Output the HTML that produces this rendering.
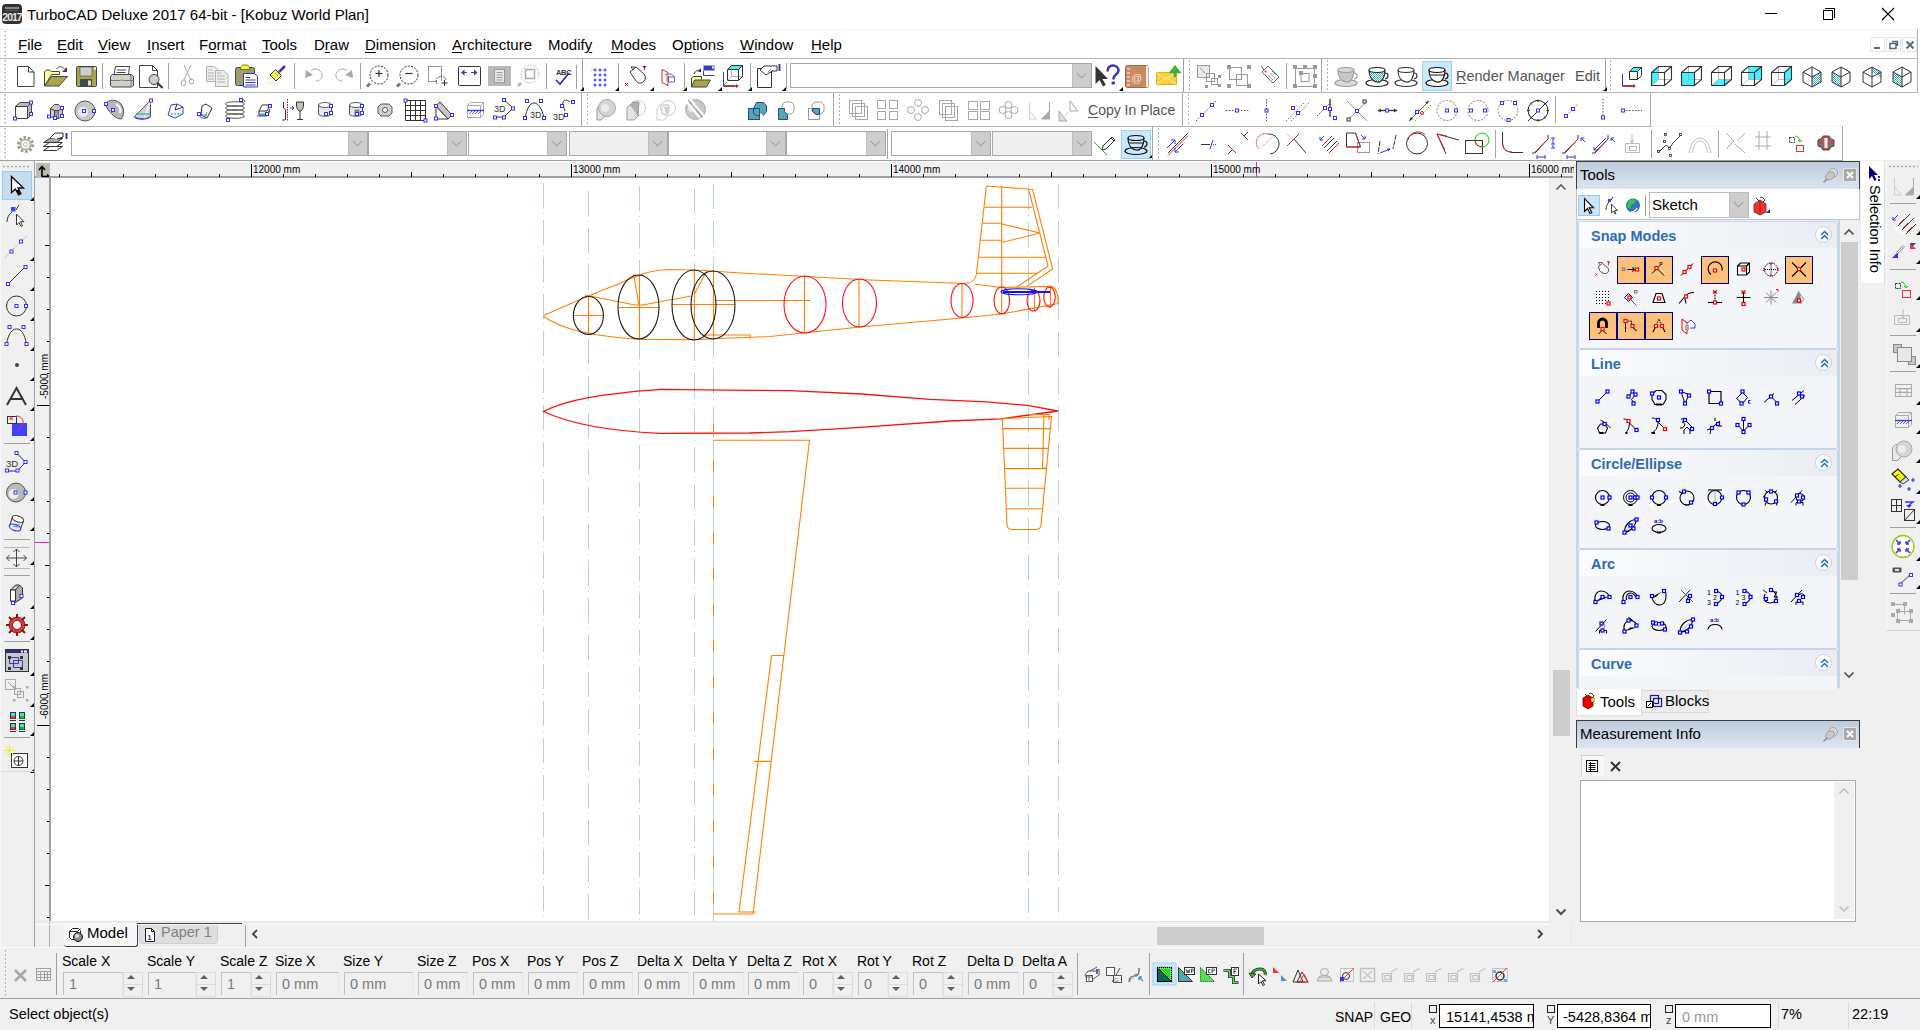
<!DOCTYPE html>
<html><head><meta charset="utf-8">
<style>
*{box-sizing:border-box;margin:0;padding:0}
html,body{width:1920px;height:1030px;overflow:hidden;background:#f0f0f0;font-family:"Liberation Sans",sans-serif;font-size:15px;color:#000;position:relative}
div,span,svg{position:absolute}
.t{white-space:pre}
u{text-decoration:underline;text-underline-offset:2px;text-decoration-thickness:1px}
.hl{left:0;height:1px;background:#b4b4b4}
.vl{width:1px;background:#a8a8a8}
.combo{height:25px;border:1px solid #a9a9a9;background:#fff}
.combo i{position:absolute;right:0;top:0;width:19px;height:23px;background:#cdcdcd;border-left:1px solid #bdbdbd}
.combo i:after{content:"";position:absolute;left:5px;top:6px;width:6px;height:6px;border-right:1px solid #a0a0a0;border-bottom:1px solid #a0a0a0;transform:rotate(45deg)}
.combo.g{background:#f0f0f0}
.combo.g b{position:absolute;left:3px;top:3px;right:22px;bottom:3px;background:#efefef}
.lab{top:953px;font-size:14px}
.inp{top:972px;height:23px;border-top:1px solid #c0c0c0;border-left:1px solid #c0c0c0;border-right:1px solid #e6e6e6;color:#7a7a7a;font-size:14.5px;padding:3px 0 0 5px;white-space:pre}
.spin{top:972px;width:19px;height:23px}
.spin:before,.spin:after{content:"";position:absolute;left:0;width:18px;height:11px;border:1px solid #dcdcdc}
.spin:before{top:0}.spin:after{top:12px}
.up,.dn{width:0;height:0;border-left:4.5px solid transparent;border-right:4.5px solid transparent}
.up{border-bottom:4px solid #606060}.dn{border-top:4px solid #606060}
.sec{left:1578px;width:260px;background:#f3f5f9;border:1px solid #c5d5e8;border-radius:3px}
.sech{left:0;top:0;right:0;height:26px;background:linear-gradient(90deg,#fbfcfd,#e9edf3);border-radius:3px 3px 0 0}
.sect{left:12px;top:6px;font-weight:bold;color:#2e6cb5;font-size:14.5px;white-space:pre}
.chev{right:5px;top:4px;width:17px;height:17px;border-radius:50%;background:#fff;border:1px solid #c5d0dd}
.ob{width:28px;height:28px;background:#fcc27c;border:1px solid #00007f}
</style></head><body>
<!-- ===== title bar ===== -->
<div style="left:0;top:0;width:1920px;height:29px;background:#fff"></div>
<div style="left:2px;top:4px;width:20px;height:20px;background:#333;border-radius:4px"></div>
<div class="t" style="left:2px;top:11px;width:20px;text-align:center;color:#e8e8e8;font-size:10.5px;font-weight:bold;letter-spacing:-1px">2017</div><div style="left:5px;top:7px;width:14px;height:1.5px;background:#8a8a8a"></div><div style="left:6px;top:10px;width:12px;height:1px;background:#5a5a5a"></div>
<div class="t" style="left:27px;top:5.5px">TurboCAD Deluxe 2017 64-bit - [Kobuz World Plan]</div>
<div style="left:1765px;top:13px;width:12px;height:1px;background:#000"></div>
<div style="left:1823px;top:10px;width:10px;height:10px;border:1px solid #000"></div>
<div style="left:1825px;top:8px;width:10px;height:10px;border-top:1px solid #000;border-right:1px solid #000"></div>
<svg style="left:1881px;top:7px" width="14" height="14"><path d="M1 1L13 13M13 1L1 13" stroke="#000" stroke-width="1.1"/></svg>

<!-- ===== toolbar band ===== -->
<div style="left:0;top:29px;width:1920px;height:131px;background:#fff"></div>
<div style="left:0;top:29px;width:1918px;height:1px;background:#eef2f8"></div>
<div style="left:0;top:29px;width:1px;height:131px;background:#eef3fb"></div>
<div style="left:1917px;top:29px;width:1px;height:64px;background:#b4b4b4"></div>
<div class="hl" style="top:58px;width:1918px"></div>
<div class="hl" style="top:92px;width:1918px"></div>
<div class="hl" style="top:126px;width:1650px"></div>
<div style="left:1650px;top:126px;width:193px;height:1px;background:#eef2f8"></div>
<div class="vl" style="left:1650px;top:92px;height:35px"></div>
<div class="vl" style="left:1842px;top:126px;height:35px"></div>
<div class="hl" style="top:160px;width:1843px;background:#a0a0a0"></div>

<svg style="left:0;top:29px" width="10" height="132"><path d="M5 2V28M5 31V62M5 65V96M5 99V130" stroke="#a8a8a8" stroke-width="1.5" stroke-dasharray="1.5 2.5"/></svg>
<!-- menu -->
<div class="t" style="left:18px;top:35.5px"><u>F</u>ile</div>
<div class="t" style="left:57px;top:35.5px"><u>E</u>dit</div>
<div class="t" style="left:98px;top:35.5px"><u>V</u>iew</div>
<div class="t" style="left:147px;top:35.5px"><u>I</u>nsert</div>
<div class="t" style="left:199px;top:35.5px">F<u>o</u>rmat</div>
<div class="t" style="left:262px;top:35.5px"><u>T</u>ools</div>
<div class="t" style="left:314px;top:35.5px">D<u>r</u>aw</div>
<div class="t" style="left:365px;top:35.5px"><u>D</u>imension</div>
<div class="t" style="left:452px;top:35.5px"><u>A</u>rchitecture</div>
<div class="t" style="left:548px;top:35.5px">Modif<u>y</u></div>
<div class="t" style="left:611px;top:35.5px"><u>M</u>odes</div>
<div class="t" style="left:672px;top:35.5px">O<u>p</u>tions</div>
<div class="t" style="left:740px;top:35.5px"><u>W</u>indow</div>
<div class="t" style="left:811px;top:35.5px"><u>H</u>elp</div>
<!-- MDI buttons -->
<div style="left:1870px;top:37px;width:15px;height:15px;border:1px solid #e4e4e4"></div>
<div style="left:1886px;top:37px;width:15px;height:15px;border:1px solid #e4e4e4"></div>
<div style="left:1902px;top:37px;width:15px;height:15px;border:1px solid #e4e4e4"></div>
<div style="left:1874px;top:47px;width:6px;height:2px;background:#5a6a7a"></div>
<svg style="left:1889px;top:40px" width="10" height="10"><path d="M3 1.5h5.5v4.5M1 3.5h6v5h-6z" fill="none" stroke="#5a6a7a" stroke-width="1.5"/></svg>
<svg style="left:1905px;top:40px" width="10" height="10"><path d="M1.5 1.5l7 7M8.5 1.5l-7 7" stroke="#5a6a7a" stroke-width="2"/></svg>

<!-- row1 combos & text -->
<div class="combo" style="left:790px;top:63px;width:302px"><i></i></div>
<div class="t" style="left:1456px;top:68px;color:#555;font-size:14.5px"><u>R</u>ender Manager</div>
<div class="t" style="left:1575px;top:68px;color:#555;font-size:14.5px">Edit</div>
<div class="t" style="left:1088px;top:102px;color:#555;font-size:14px"><u>C</u>opy In Place</div>
<!-- row3 combos -->
<div class="combo" style="left:71px;top:131px;width:297px"><i></i></div>
<div class="combo" style="left:368px;top:131px;width:99px"><i></i></div>
<div class="combo" style="left:468px;top:131px;width:99px"><i></i></div>
<div class="combo g" style="left:569px;top:131px;width:99px"><b></b><i></i></div>
<div class="combo" style="left:668px;top:131px;width:118px"><i></i></div>
<div class="combo" style="left:786px;top:131px;width:100px"><i></i></div>
<div class="vl" style="left:887px;top:129px;height:30px"></div>
<div class="combo" style="left:891px;top:131px;width:100px"><i></i></div>
<div class="combo g" style="left:992px;top:131px;width:100px"><b></b><i></i></div>

<!-- highlighted toolbar buttons -->
<div style="left:1422px;top:61px;width:30px;height:30px;background:#cce8ff;border:1px solid #99d1ff"></div>
<div style="left:1121px;top:130px;width:30px;height:29px;background:#cce8ff;border:1px solid #99d1ff"></div>

<!--ROW1--><svg style="left:0;top:58px" width="1920" height="36" viewBox="0 58 1920 36"><defs><pattern id="hx" width="2" height="2" patternUnits="userSpaceOnUse"><rect width="2" height="2" fill="#fff"/><rect width="1" height="1" fill="#30b8b8"/><rect x="1" y="1" width="1" height="1" fill="#30b8b8"/></pattern></defs><path d="M102.5 63V89" stroke="#a0a0a0"/><path d="M168.5 63V89" stroke="#a0a0a0"/><path d="M294.5 63V89" stroke="#a0a0a0"/><path d="M360.5 63V89" stroke="#a0a0a0"/><path d="M546.5 63V89" stroke="#a0a0a0"/><path d="M576.5 65V89" stroke="#a0a0a0"/><path d="M582.5 59V92" stroke="#a0a0a0"/><path d="M618.5 63V89" stroke="#a0a0a0"/><path d="M684.5 63V89" stroke="#a0a0a0"/><path d="M750.5 63V89" stroke="#a0a0a0"/><path d="M786.5 63V89" stroke="#a0a0a0"/><path d="M1183.5 59V92" stroke="#a0a0a0"/><path d="M1286.5 63V89" stroke="#a0a0a0"/><path d="M1321.5 59V92" stroke="#a0a0a0"/><path d="M1605.5 59V92" stroke="#a0a0a0"/><path d="M580 91h4v-4z" fill="#000"/><path d="M615 91h4v-4z" fill="#000"/><path d="M650 91h4v-4z" fill="#000"/><path d="M683 91h4v-4z" fill="#000"/><path d="M718 91h4v-4z" fill="#000"/><path d="M748 91h4v-4z" fill="#000"/><path d="M782 91h4v-4z" fill="#000"/><path d="M1119 91h4v-4z" fill="#000"/><path d="M1603 91h4v-4z" fill="#000"/><path d="M1189.5 60V91" stroke="#b0b0b0" stroke-dasharray="2 2"/><path d="M1327.5 60V91" stroke="#b0b0b0" stroke-dasharray="2 2"/><path d="M1610.5 60V91" stroke="#b0b0b0" stroke-dasharray="2 2"/><path d="M17.5 66.5h11l5.5 5.5v14.5h-16.5z" fill="#fff" stroke="#444"/><path d="M28.5 66.5v5.5h5.5" fill="none" stroke="#444"/><path d="M44.5 86V71.5l2-1.5h3l2 1.5h8v3h-8z" fill="#ffff9a" stroke="#444"/><path d="M44.5 86l7-9.5h16l-8.5 9.5z" fill="#a9a548" stroke="#444"/><path d="M56.5 69c2-3 6-3 8 0" fill="none" stroke="#444"/><path d="M67 67v5h-5z" fill="#444"/><rect x="76.5" y="66.5" width="20" height="20" rx="1" fill="#a9a548" stroke="#444"/><rect x="80" y="67" width="12" height="9" fill="#cfcfcf" stroke="#444" stroke-width="0.6"/><rect x="80" y="79" width="12" height="8" fill="#484848"/><rect x="88" y="80.5" width="3" height="5" fill="#ddd"/><rect x="94" y="67.5" width="2" height="2" fill="#fff"/><path d="M115.5 66.5h14l-1 8h-14.5z" fill="#fff" stroke="#444"/><path d="M117 70h9M116.5 72.5h9" stroke="#444"/><path d="M110.5 76.5l2-2h19l2 2v9l-2 1.5h-19l-2-1.5z" fill="#cfcfcf" stroke="#444"/><path d="M111 80.5h22M131 75v11" stroke="#777"/><rect x="120" y="79" width="4" height="1.5" fill="#e8d800"/><path d="M139.5 65.5h13l5 5v17h-18z" fill="#fff" stroke="#444"/><path d="M152.5 65.5v5h5" fill="none" stroke="#444"/><circle cx="154" cy="79.5" r="5" fill="#cfcfcf" stroke="#444"/><path d="M157.5 83l5 5" stroke="#333" stroke-width="2"/><path d="M151 77.5l1-1M156 82l1-1" stroke="#3cf" stroke-width="1"/><g fill="none" stroke="#a8a8a8"><path d="M184 65l7 15M191 65l-7 15"/><ellipse cx="183.5" cy="83" rx="2.3" ry="3"/><ellipse cx="191.5" cy="81.5" rx="2.3" ry="2.5"/></g><g stroke="#b0b0b0" fill="#ededed"><path d="M206.5 66.5h8l3 3v12h-11z"/><path d="M215.5 70.5h8l4.5 4.5v11.5h-12.5z"/></g><path d="M208 70h4M208 73h6M208 76h6M208 79h6M217 73h4M217 76h8M217 79h8M217 82h8" stroke="#b0b0b0"/><rect x="235.5" y="67.5" width="19" height="18" rx="2" fill="#a09c6c" stroke="#444"/><path d="M240.5 69.5h9v-2l-2-2.5h-5l-2 2.5z" fill="#ff0" stroke="#444" stroke-width="0.7"/><path d="M243.5 73.5h11l3 3v10.5h-14z" fill="#fff" stroke="#3a3ab8"/><path d="M245.5 77.5h5M245.5 80h10M245.5 82.5h10M245.5 85h10" stroke="#3a3ab8"/><path d="M270 75l5.5-5.5 6 6-5.5 5.5z" fill="#f8f870" stroke="#333"/><path d="M272 77l5-5M274 79l5-5" stroke="#e0e000"/><path d="M279 72l6-6" stroke="#3a3ab8" stroke-width="2.5"/><path d="M268 84l5-2" stroke="#f0f040" stroke-width="2" stroke-dasharray="1 1"/><path d="M311 70.5c4-3 10-1 11 3.5s-3 7-6 7" fill="none" stroke="#a8a8a8" stroke-width="1"/><path d="M305 78l1-8 7 5z" fill="#a8a8a8"/><path d="M347 70.5c-4-3-10-1-11 3.5s3 7 6 7" fill="none" stroke="#a8a8a8" stroke-width="1"/><path d="M353 78l-1-8-7 5z" fill="#a8a8a8"/><circle cx="379" cy="75" r="9" fill="none" stroke="#333" stroke-dasharray="2.2 1.2"/><path d="M370 83.5l-3 3" stroke="#777" stroke-width="3"/><path d="M375.5 73.5h7" stroke="#333" stroke-width="1.2"/><path d="M379 70v7" stroke="#333" stroke-width="1.2"/><circle cx="409" cy="75" r="9" fill="none" stroke="#333" stroke-dasharray="2.2 1.2"/><path d="M400 83.5l-3 3" stroke="#777" stroke-width="3"/><path d="M405.5 73.5h7" stroke="#333" stroke-width="1.2"/><path d="M428.5 66.5h13v14" fill="none" stroke="#333" stroke-dasharray="1 1"/><path d="M428.5 66.5v15h8" fill="none" stroke="#333" stroke-dasharray="1 1"/><path d="M437 84a5 5 0 1 1 9-4" fill="none" stroke="#333" stroke-dasharray="1.5 1"/><path d="M444.5 80v6M441.5 83h6" stroke="#333"/><rect x="458.5" y="66.5" width="22" height="19" rx="1" fill="#fff" stroke="#333"/><path d="M461 72.5l3.5-3v6zM477.5 72.5l-3.5-3v6z" fill="#3a3ab8"/><path d="M464 72.5h3M471 72.5h3" stroke="#3a3ab8"/><rect x="488" y="66" width="23" height="20" fill="#b8b8b8"/><rect x="494.5" y="69.5" width="10" height="13" fill="#e8e8e8" stroke="#999"/><path d="M496.5 72.5h6M496.5 75h6M496.5 77.5h6M496.5 80h6" stroke="#999"/><circle cx="530" cy="74" r="9" fill="none" stroke="#c8c8c8" stroke-dasharray="2 1"/><rect x="525.5" y="69.5" width="9" height="9" fill="none" stroke="#a8a8a8" stroke-width="1.5"/><path d="M521 83l-3 3" stroke="#bbb" stroke-width="3"/><text x="556" y="75" font-family="Liberation Sans" font-weight="bold" font-size="7.5" fill="#333" letter-spacing="-0.3">ABC</text><path d="M556 80l4 4 9-11" fill="none" stroke="#2a2a9a" stroke-width="1.6"/><g fill="#2020ee"><path d="M593.5 70h3M595 68.5v3" stroke="#2020ee"/><path d="M593.5 75h3M595 73.5v3" stroke="#2020ee"/><path d="M593.5 80h3M595 78.5v3" stroke="#2020ee"/><path d="M593.5 85h3M595 83.5v3" stroke="#2020ee"/><path d="M598.5 70h3M600 68.5v3" stroke="#2020ee"/><path d="M598.5 75h3M600 73.5v3" stroke="#2020ee"/><path d="M598.5 80h3M600 78.5v3" stroke="#2020ee"/><path d="M598.5 85h3M600 83.5v3" stroke="#2020ee"/><path d="M603.5 70h3M605 68.5v3" stroke="#2020ee"/><path d="M603.5 75h3M605 73.5v3" stroke="#2020ee"/><path d="M603.5 80h3M605 78.5v3" stroke="#2020ee"/><path d="M603.5 85h3M605 83.5v3" stroke="#2020ee"/></g><path d="M591 68l3 3M594 68l-3 3" stroke="#ee0"/><path d="M630 72l6-5 8 7c2 2 2 6-1 8s-5 1-7-1z" fill="#fff" stroke="#333"/><path d="M633 70l-2-3h4" fill="none" stroke="#333"/><path d="M625 83l3 3M628 83l-3 3" stroke="#e00"/><path d="M643 66l1.5 2 1.5-2M644.5 68v2" stroke="#e00"/><path d="M662 69.5l6 3v13l-6-3z" fill="none" stroke="#e02020"/><path d="M665.5 74h6l3 3h-6zM668.5 77v5h6v-5" fill="#fff" stroke="#3a3ab8" stroke-width="0.8"/><path d="M667 76v5" stroke="#888"/><path d="M691.5 87v-9l2-1.5h8v3" fill="#ffff9a" stroke="#444"/><path d="M691.5 87l3-7h16l-4 7z" fill="#a9a548" stroke="#444"/><rect x="703.5" y="65.5" width="11" height="5" fill="#3a3ab8"/><path d="M703.5 70.5v5h11" fill="none" stroke="#3a3ab8"/><rect x="712" y="66.5" width="2" height="2" fill="#fff"/><path d="M694 74c1-3 4-4 6-4" fill="none" stroke="#333"/><path d="M701 68v4h-3z" fill="#333"/><path d="M727.5 69.5l4-4h11v11l-4 4h-11z" fill="#fff" stroke="#333"/><path d="M727.5 69.5h11l4-4h-11z" fill="#40f0f8" stroke="#333"/><path d="M738.5 69.5v11M731.5 65.5v11h11M727.5 80.5l4-4" stroke="#999" stroke-width="0.7" fill="none"/><path d="M738.5 69.5v11" stroke="#333"/><path d="M723.5 72v14h13" fill="none" stroke="#3a3ab8"/><path d="M723.5 86h12" stroke="#b03030" stroke-width="1.8"/><path d="M736 84l3 2-3 2z" fill="#b03030"/><path d="M724 85l3-3" stroke="#0c0"/><path d="M757.5 68.5h14v19h-14z" fill="#fff" stroke="#333"/><path d="M760 70l4-4h13v5h-5l-6 4z" fill="#fff" stroke="#333"/><path d="M779.5 64v7" stroke="#3a3ab8" stroke-width="2"/><path d="M768 72l3-3M770 73l3-3" stroke="#333" stroke-width="0.6"/><path d="M1095.5 66v18l4-4 3.5 6.5 2.8-1.4-3.3-6.1h5.5z" fill="#333"/><path d="M1107.5 71.5c0-4 2.5-6 5.5-6s5.5 2 5.5 5c0 4-5 4-5 8v1" fill="none" stroke="#3a3ab8" stroke-width="2.6"/><rect x="1111.5" y="81.5" width="3.5" height="3" rx="1" fill="#3a3ab8"/><rect x="1125.5" y="65.5" width="23" height="22" rx="2" fill="#c88a62" stroke="#a06a4a"/><rect x="1146" y="66" width="2.5" height="21" fill="#eee"/><path d="M1127 69h3M1127 73h3M1127 77h3M1127 81h3M1127 85h3" stroke="#fff" stroke-width="1"/><text x="1131" y="82" font-family="Liberation Sans" font-size="11" fill="#f4e0d0">@</text><path d="M1156.5 72.5h20v12h-20z" fill="#f8d040" stroke="#e0b020"/><path d="M1156.5 84.5l10-7 10 7M1156.5 72.5l10 7 10-7" fill="none" stroke="#fff3a0"/><path d="M1175 77v-9M1171 72l4-5 4 5z" stroke="#40b030" fill="#40b030" stroke-width="2.5"/><g fill="none" stroke="#999"><rect x="1197.5" y="65.5" width="12" height="12" fill="#eaeaea"/><rect x="1206.5" y="73.5" width="8" height="8"/><rect x="1211.5" y="78.5" width="6" height="6"/></g><g fill="#999"><rect x="1205" y="85" width="3" height="3"/><rect x="1218" y="84" width="3" height="3"/><rect x="1218" y="75" width="3" height="3"/></g><path d="M1200 68l5 5" stroke="#999"/><g fill="none" stroke="#999"><rect x="1229.5" y="67.5" width="12" height="12"/><rect x="1236.5" y="74.5" width="11" height="11"/></g><g fill="#999"><rect x="1227" y="65" width="4" height="4"/><rect x="1247" y="65" width="4" height="4"/><rect x="1227" y="84" width="4" height="4"/><rect x="1247" y="84" width="4" height="4"/></g><path d="M1262 72l6-6 11 11-6 6z" fill="#fff" stroke="#666"/><path d="M1268 75l5 5M1270 73l5 5M1272 71l4 4" stroke="#777" stroke-width="0.7"/><circle cx="1265.5" cy="71.5" r="1" fill="#d03030"/><path d="M1261 66l3 4" stroke="#666"/><g fill="none" stroke="#999"><path d="M1295.5 68.5h19v18h-19zM1301 73.5h8v8h-8z"/></g><g fill="#999"><rect x="1293" y="65" width="4" height="4"/><rect x="1313" y="65" width="4" height="4"/><rect x="1293" y="84" width="4" height="4"/><rect x="1313" y="84" width="4" height="4"/><rect x="1303" y="65" width="4" height="4"/><rect x="1299" y="71" width="4" height="4"/><rect x="1313" y="74" width="4" height="4"/></g><ellipse cx="1346" cy="83" rx="11" ry="3.5" fill="#d8d8d8" stroke="#9a9a9a" stroke-width="1.1"/><path d="M1338 70c0 5 2 11 8 12s8-7 8-12" fill="#c8c8c8" stroke="#9a9a9a" stroke-width="1.1"/><ellipse cx="1346" cy="70" rx="8" ry="2.5" fill="#d8d8d8" stroke="#9a9a9a" stroke-width="1.1"/><path d="M1354 73c4 0 4 5 0 6" fill="none" stroke="#9a9a9a" stroke-width="1.1"/><ellipse cx="1377" cy="83" rx="11" ry="3.5" fill="#fff" stroke="#222" stroke-width="1.1"/><path d="M1369 70c0 5 2 11 8 12s8-7 8-12" fill="url(#hx)" stroke="#222" stroke-width="1.1"/><ellipse cx="1377" cy="70" rx="8" ry="2.5" fill="#fff" stroke="#222" stroke-width="1.1"/><path d="M1385 73c4 0 4 5 0 6" fill="none" stroke="#222" stroke-width="1.1"/><ellipse cx="1406" cy="83" rx="11" ry="3.5" fill="#fff" stroke="#333" stroke-width="1.1"/><path d="M1398 70c0 5 2 11 8 12s8-7 8-12" fill="#fff" stroke="#333" stroke-width="1.1"/><ellipse cx="1406" cy="70" rx="8" ry="2.5" fill="#fff" stroke="#333" stroke-width="1.1"/><path d="M1414 73c4 0 4 5 0 6" fill="none" stroke="#333" stroke-width="1.1"/><ellipse cx="1437" cy="83" rx="11" ry="3.5" fill="#fff" stroke="#111" stroke-width="1.1"/><path d="M1429 70c0 5 2 11 8 12s8-7 8-12" fill="#fff" stroke="#111" stroke-width="1.1"/><ellipse cx="1437" cy="70" rx="8" ry="2.5" fill="#fff" stroke="#111" stroke-width="1.1"/><path d="M1445 73c4 0 4 5 0 6" fill="none" stroke="#111" stroke-width="1.1"/><path d="M1430 75h14" stroke="#111"/><path d="M1629.5 71.5l4-4h8v8l-4 4h-8z" fill="#fff" stroke="#333"/><path d="M1629.5 71.5h8l4-4h-8z" fill="#40f4ff" stroke="#333"/><path d="M1637.5 71.5v8" stroke="#333"/><path d="M1622.5 74v12h11" fill="none" stroke="#3a3ab8"/><path d="M1622.5 86h11" stroke="#b03030" stroke-width="1.8"/><path d="M1633 84l3 2-3 2z" fill="#b03030"/><path d="M1651.5 72.5l7-6v13l-7 6z" fill="#40f4ff"/><path d="M1658.5 66.5v13h13M1651.5 85.5l7-6" fill="none" stroke="#aaa" stroke-width="0.8"/><path d="M1651.5 72.5h13v13h-13zM1651.5 72.5l7-6h13v13l-7 6M1664.5 72.5l7-6" fill="none" stroke="#333" stroke-width="1.1"/><path d="M1681.5 72.5h13v13h-13z" fill="#40f4ff"/><path d="M1688.5 66.5v13h13M1681.5 85.5l7-6" fill="none" stroke="#aaa" stroke-width="0.8"/><path d="M1681.5 72.5h13v13h-13zM1681.5 72.5l7-6h13v13l-7 6M1694.5 72.5l7-6" fill="none" stroke="#333" stroke-width="1.1"/><path d="M1711.5 85.5l7-6h13l-7 6z" fill="#40f4ff"/><path d="M1718.5 66.5v13h13M1711.5 85.5l7-6" fill="none" stroke="#aaa" stroke-width="0.8"/><path d="M1711.5 72.5h13v13h-13zM1711.5 72.5l7-6h13v13l-7 6M1724.5 72.5l7-6" fill="none" stroke="#333" stroke-width="1.1"/><path d="M1748.5 66.5h13v13h-13z" fill="#40f4ff"/><path d="M1748.5 66.5v13h13M1741.5 85.5l7-6" fill="none" stroke="#aaa" stroke-width="0.8"/><path d="M1741.5 72.5h13v13h-13zM1741.5 72.5l7-6h13v13l-7 6M1754.5 72.5l7-6" fill="none" stroke="#333" stroke-width="1.1"/><path d="M1784.5 72.5l7-6v13l-7 6z" fill="#40f4ff"/><path d="M1778.5 66.5v13h13M1771.5 85.5l7-6" fill="none" stroke="#aaa" stroke-width="0.8"/><path d="M1771.5 72.5h13v13h-13zM1771.5 72.5l7-6h13v13l-7 6M1784.5 72.5l7-6" fill="none" stroke="#333" stroke-width="1.1"/><path d="M1812 77l9-5v10l-9 5z" fill="url(#hx)"/><path d="M1812 67l9 5v10l-9 5-9-5v-10zM1812 77v10M1812 77l9-5M1812 77l-9-5M1812 67v10" fill="none" stroke="#333" stroke-width="1"/><path d="M1841 77l-9-5v10l9 5z" fill="url(#hx)"/><path d="M1841 67l9 5v10l-9 5-9-5v-10zM1841 77v10M1841 77l9-5M1841 77l-9-5M1841 67v10" fill="none" stroke="#333" stroke-width="1"/><path d="M1872 67l9 5v5l-9-5z" fill="url(#hx)"/><path d="M1872 67l9 5v10l-9 5-9-5v-10zM1872 77v10M1872 77l9-5M1872 77l-9-5M1872 67v10" fill="none" stroke="#333" stroke-width="1"/><path d="M1902 77l-9-5v10l9 5z" fill="url(#hx)"/><path d="M1902 67l9 5v10l-9 5-9-5v-10zM1902 77v10M1902 77l9-5M1902 77l-9-5M1902 67v10" fill="none" stroke="#333" stroke-width="1"/></svg><!--/ROW1-->
<!--ROW23--><svg style="left:0;top:92px" width="1920" height="70" viewBox="0 92 1920 70"><path d="M581.5 93V126" stroke="#a8a8a8"/><path d="M833.5 93V126" stroke="#a8a8a8"/><path d="M1182.5 93V126" stroke="#a8a8a8"/><path d="M1555.5 96V123" stroke="#a8a8a8"/><path d="M587.5 94V125" stroke="#b0b0b0" stroke-dasharray="2 2"/><path d="M839.5 94V125" stroke="#b0b0b0" stroke-dasharray="2 2"/><path d="M1188.5 94V125" stroke="#b0b0b0" stroke-dasharray="2 2"/><path d="M15.5 106.5l4-4h12v12l-4 4" fill="#b8b8b8" stroke="#444"/><rect x="15.5" y="106.5" width="12" height="12" fill="#fff" stroke="#444"/><path d="M27.5 106.5l4-4" stroke="#444"/><rect x="29.5" y="101.0" width="3" height="3" fill="#fff" stroke="#3030ff" stroke-width="1"/><rect x="29.5" y="112.5" width="3" height="3" fill="#fff" stroke="#3030ff" stroke-width="1"/><rect x="13.5" y="117.0" width="3" height="3" fill="#fff" stroke="#3030ff" stroke-width="1"/><path d="M50.5 108.5l4-4h4l4 4v8l-4 2h-4l-4-2z" fill="#c8c8c8" stroke="#444"/><path d="M50.5 108.5l4 2h4l4-2M54.5 110.5v8M58.5 110.5v8" fill="none" stroke="#444"/><rect x="55" y="111" width="3.5" height="7" fill="#999"/><path d="M49 117h5" stroke="#0cc"/><rect x="47.5" y="115.0" width="3" height="3" fill="#fff" stroke="#3030ff" stroke-width="1"/><rect x="60.5" y="106.5" width="3" height="3" fill="#fff" stroke="#3030ff" stroke-width="1"/><rect x="60.5" y="114.5" width="3" height="3" fill="#fff" stroke="#3030ff" stroke-width="1"/><rect x="53.5" y="116.5" width="3" height="3" fill="#fff" stroke="#3030ff" stroke-width="1"/><circle cx="85" cy="111" r="10" fill="#c8c8c8" stroke="#555"/><circle cx="83" cy="112" r="5" fill="#ececec"/><rect x="82.5" y="109.5" width="3" height="3" fill="#fff" stroke="#3030ff" stroke-width="1"/><rect x="92.5" y="109.5" width="3" height="3" fill="#fff" stroke="#3030ff" stroke-width="1"/><path d="M105 104c4-5 12-5 16 0s3 12 0 15c-6 0-13-8-16-15z" fill="#b8b8b8" stroke="#555"/><path d="M116 104c4 2 5 6 4 9" stroke="#fff" stroke-width="2" fill="none"/><rect x="104.5" y="102.5" width="3" height="3" fill="#fff" stroke="#3030ff" stroke-width="1"/><rect x="111.5" y="108.5" width="3" height="3" fill="#fff" stroke="#3030ff" stroke-width="1"/><path d="M150.5 100.5l-16 16c3 3 13 3 16 0z" fill="#d0d0d0" stroke="#555"/><path d="M150.5 100.5l-6 18" stroke="#f0f0f0" stroke-width="2"/><path d="M136 114h14" stroke="#0aa"/><path d="M134 117c3 3 13 3 16 0" fill="none" stroke="#33f"/><rect x="149.5" y="99.0" width="3" height="3" fill="#fff" stroke="#3030ff" stroke-width="1"/><path d="M171 105l6-1 6 3v7l-8 4-7-3z" fill="#fff" stroke="#33f"/><path d="M177 104l-2 6M175 110l8-3" stroke="#333" fill="none"/><path d="M171 114h11" stroke="#0aa" stroke-dasharray="2 1"/><path d="M202 106l4-2 6 4-5 10-6-3z" fill="#fff" stroke="#333"/><path d="M199 115c1 3 5 4 7 3" fill="none" stroke="#33f"/><path d="M207 112l-2 5" stroke="#888"/><path d="M202 115h5" stroke="#0aa"/><rect x="197.5" y="112.5" width="3" height="3" fill="#fff" stroke="#3030ff" stroke-width="1"/><g fill="none" stroke="#555"><ellipse cx="235" cy="104" rx="9.5" ry="2.3"/><ellipse cx="235" cy="108" rx="9.5" ry="2.3"/><ellipse cx="235" cy="112" rx="9.5" ry="2.3"/><ellipse cx="235" cy="116" rx="9.5" ry="2.3"/></g><path d="M244.5 102c0-2-1-3-2-3" fill="none" stroke="#555"/><rect x="239.5" y="98.5" width="3" height="3" fill="#fff" stroke="#3030ff" stroke-width="1"/><rect x="226.5" y="118.5" width="3" height="3" fill="#fff" stroke="#3030ff" stroke-width="1"/><path d="M259 111l3-6h8l-3 6zM259 111v4l8 0 3-6" fill="#fff" stroke="#333"/><path d="M260 114h8" stroke="#0aa"/><path d="M257 116h10l3-5" fill="none" stroke="#33f"/><rect x="268.5" y="104.5" width="3" height="3" fill="#fff" stroke="#3030ff" stroke-width="1"/><rect x="265.5" y="112.5" width="3" height="3" fill="#fff" stroke="#3030ff" stroke-width="1"/><path d="M283.5 102v6l2 2v10" fill="none" stroke="#333"/><path d="M282 120h3" stroke="#333"/><path d="M287.5 99v22" stroke="#e00" stroke-dasharray="1.5 1"/><path d="M290 108h4M292 106l2 2-2 2" fill="none" stroke="#33f"/><path d="M296.5 102h7v3c0 4-2 6-3.5 6s-3.5-2-3.5-6z" fill="#c0c0c0" stroke="#333"/><path d="M300 111v8M297 119.5h6" stroke="#333"/><path d="M318.5 105v9c0 3 13 3 13 0v-9" fill="#e8e8e8" stroke="#555"/><ellipse cx="325" cy="105" rx="6.5" ry="2.5" fill="#fff" stroke="#555"/><path d="M349.5 105v9c0 3 13 3 13 0v-9" fill="#e8e8e8" stroke="#555"/><ellipse cx="356" cy="105" rx="6.5" ry="2.5" fill="#fff" stroke="#555"/><rect x="329.5" y="104.5" width="3" height="3" fill="#fff" stroke="#3030ff" stroke-width="1"/><rect x="329.5" y="111.5" width="3" height="3" fill="#fff" stroke="#3030ff" stroke-width="1"/><rect x="324.5" y="112.5" width="3" height="3" fill="#fff" stroke="#3030ff" stroke-width="1"/><rect x="354.5" y="109.5" width="5" height="6" fill="#888"/><rect x="360.5" y="104.5" width="3" height="3" fill="#fff" stroke="#3030ff" stroke-width="1"/><rect x="360.5" y="111.5" width="3" height="3" fill="#fff" stroke="#3030ff" stroke-width="1"/><rect x="355.5" y="112.5" width="3" height="3" fill="#fff" stroke="#3030ff" stroke-width="1"/><path d="M381 104h8l3 3v6l-3 3h-8l-3-3v-6z" fill="#d0d0d0" stroke="#555"/><circle cx="385" cy="110" r="2.5" fill="#fff" stroke="#555"/><path d="M405.5 100.5h20v20h-20zM405.5 105.5h20M405.5 110.5h20M405.5 115.5h20M410.5 100.5v20M415.5 100.5v20M420.5 100.5v20" fill="none" stroke="#333"/><rect x="404.0" y="99.0" width="3" height="3" fill="#fff" stroke="#3030ff" stroke-width="1"/><rect x="424.0" y="119.0" width="3" height="3" fill="#fff" stroke="#3030ff" stroke-width="1"/><path d="M436 106v13h12z" fill="#fff" stroke="#333"/><path d="M436 106l4-4 12 13-4 4z" fill="#c8c8c8" stroke="#333"/><rect x="434.5" y="104.5" width="3" height="3" fill="#fff" stroke="#3030ff" stroke-width="1"/><rect x="434.5" y="117.0" width="3" height="3" fill="#fff" stroke="#3030ff" stroke-width="1"/><rect x="450.5" y="113.5" width="3" height="3" fill="#fff" stroke="#3030ff" stroke-width="1"/><g fill="none" stroke="#aaa"><path d="M467.5 105.5l3-3h13v12l-3 3h-13zM467.5 105.5h13v12M480.5 105.5l3-3"/></g><path d="M467 110.5h17" stroke="#33f" stroke-width="1.3"/><path d="M469 114l3-3M472 114l3-3M475 114l3-3M478 114l3-3" stroke="#33f" stroke-width="0.8"/><text x="494" y="112" font-family="Liberation Sans" font-size="9" fill="#333">3D</text><path d="M504 100l9 8-9 9h-9" fill="none" stroke="#333"/><rect x="502.5" y="98.5" width="3" height="3" fill="#fff" stroke="#3030ff" stroke-width="1"/><rect x="511.5" y="107.0" width="3" height="3" fill="#fff" stroke="#3030ff" stroke-width="1"/><rect x="502.5" y="116.0" width="3" height="3" fill="#fff" stroke="#3030ff" stroke-width="1"/><rect x="493.5" y="116.0" width="3" height="3" fill="#fff" stroke="#3030ff" stroke-width="1"/><text x="530" y="118" font-family="Liberation Sans" font-size="9" fill="#333">3D</text><path d="M525 118c2-10 5-15 9-15s8 5 10 15" fill="none" stroke="#333"/><rect x="525.5" y="99.5" width="3" height="3" fill="#fff" stroke="#3030ff" stroke-width="1"/><rect x="539.5" y="99.5" width="3" height="3" fill="#fff" stroke="#3030ff" stroke-width="1"/><rect x="523.5" y="116.5" width="3" height="3" fill="#fff" stroke="#3030ff" stroke-width="1"/><rect x="542.5" y="116.5" width="3" height="3" fill="#fff" stroke="#3030ff" stroke-width="1"/><text x="553" y="120" font-family="Liberation Sans" font-size="9" fill="#333">3D</text><path d="M563 102c2-3 5-2 7 0M563 102c-1 3 1 5 2 9" fill="none" stroke="#333"/><rect x="560.5" y="104.5" width="3" height="3" fill="#fff" stroke="#3030ff" stroke-width="1"/><rect x="571.5" y="100.5" width="3" height="3" fill="#fff" stroke="#3030ff" stroke-width="1"/><rect x="564.5" y="113.5" width="3" height="3" fill="#fff" stroke="#3030ff" stroke-width="1"/><path d="M597 108l3-3h5v11l-4 4h-4z" fill="#e4e4e4" stroke="#999"/><circle cx="607" cy="108" r="8.5" fill="#d4d4d4" stroke="#aaa"/><circle cx="605" cy="108" r="4" fill="#ececec"/><circle cx="638" cy="108" r="7.5" fill="none" stroke="#ccc"/><path d="M627 108l3-3h8v11l-4 4h-7z" fill="#e4e4e4" stroke="#999"/><path d="M630 105l3-3h6l-1 14" fill="#b0b0b0" stroke="#999"/><g fill="none" stroke="#ccc"><circle cx="668" cy="108" r="7.5"/><path d="M657 108l3-3h8v11l-4 4h-7z"/><path d="M662 107l2-2h5v7l-2 2h-5z"/></g><path d="M664 107h4v5l-2 2" fill="#ccc"/><circle cx="695.5" cy="109.5" r="10" fill="#c8c8c8" stroke="#aaa"/><circle cx="692" cy="108" r="4" fill="#eee"/><path d="M686 101l14 17M690 99l14 17" stroke="#fff" stroke-width="2"/><path d="M688 100l14 17" stroke="#888"/><path d="M753.5 108.5l3-6h7l3 3v6l-3 4" fill="#50aaa8" stroke="#3a3ab8"/><rect x="748.5" y="108.5" width="11" height="11" fill="#50aaa8" stroke="#3a3ab8"/><path d="M753.5 108.5v5l3 2h3" fill="none" stroke="#3a3ab8"/><path d="M785 102l6 0 3 3v6l-3 3h-6l-3-3v-6z" fill="none" stroke="#999"/><path d="M778.5 108.5h6v3l3 3v5h-9z" fill="#50aaa8" stroke="#3a3ab8"/><path d="M815 102l6 0 3 3v6l-3 3h-6l-3-3v-6z" fill="none" stroke="#999"/><rect x="808.5" y="108.5" width="11" height="11" fill="none" stroke="#999"/><path d="M812.5 108.5h7v6h-3l-4-3z" fill="#50aaa8" stroke="#3a3ab8"/><g fill="none" stroke="#a8a8a8"><rect x="849.5" y="100.5" width="12" height="13"/><rect x="852.5" y="103.5" width="12" height="13"/><rect x="855.5" y="106.5" width="12" height="13"/></g><g fill="none" stroke="#a8a8a8"><rect x="877.5" y="100.5" width="8" height="8"/><rect x="889.5" y="100.5" width="8" height="8"/><rect x="877.5" y="111.5" width="8" height="8"/><rect x="889.5" y="111.5" width="8" height="8"/></g><g fill="none" stroke="#a8a8a8"><circle cx="918" cy="103" r="3.5"/><circle cx="911" cy="110" r="3.5"/><circle cx="925" cy="110" r="3.5"/><circle cx="918" cy="117" r="3.5"/></g><g fill="none" stroke="#a8a8a8"><rect x="939.5" y="100.5" width="12" height="14"/><rect x="942.5" y="103.5" width="12" height="14"/><rect x="945.5" y="106.5" width="12" height="14"/></g><g fill="none" stroke="#a8a8a8"><rect x="968.5" y="101.5" width="9" height="8"/><rect x="980.5" y="101.5" width="9" height="8"/><rect x="968.5" y="111.5" width="9" height="8"/><rect x="980.5" y="111.5" width="9" height="8"/></g><g fill="none" stroke="#a8a8a8"><circle cx="1008.5" cy="105" r="3.5"/><circle cx="1002.5" cy="110" r="3.5"/><circle cx="1014.5" cy="110" r="3.5"/><circle cx="1008.5" cy="115" r="3.5"/></g><path d="M1029.5 102v17h7l-7-8" fill="none" stroke="#ccc"/><path d="M1049.5 102v17h-8l8-8z" fill="#aaa" stroke="#a8a8a8"/><path d="M1070 101v10h8z" fill="none" stroke="#a8a8a8"/><path d="M1059 111v10h8z" fill="#ddd" stroke="#a8a8a8"/><path d="M1062 118l6-6" stroke="#ccc"/><path d="M1196 121l20-20" stroke="#555" stroke-dasharray="1.5 1.5"/><rect x="1200.5" y="113.5" width="3" height="3" fill="#fff" stroke="#3030ff" stroke-width="1"/><rect x="1210.5" y="103.5" width="3" height="3" fill="#fff" stroke="#3030ff" stroke-width="1"/><path d="M1226 110.5h24" stroke="#555" stroke-dasharray="1.5 1.5"/><rect x="1235.5" y="109.0" width="3" height="3" fill="#fff" stroke="#3030ff" stroke-width="1"/><path d="M1266.5 99v22" stroke="#555" stroke-dasharray="1.5 1.5"/><rect x="1265.0" y="109.0" width="3" height="3" fill="#fff" stroke="#3030ff" stroke-width="1"/><path d="M1286 121l18-18M1291 121l18-18" stroke="#777" stroke-dasharray="1.5 1.5"/><rect x="1291.5" y="106.5" width="3" height="3" fill="#fff" stroke="#3030ff" stroke-width="1"/><rect x="1296.5" y="111.5" width="3" height="3" fill="#fff" stroke="#3030ff" stroke-width="1"/><path d="M1317 116l14-14M1330 99v18" stroke="#333" stroke-dasharray="1.5 1"/><path d="M1330 99v18" stroke="#333"/><rect x="1323.5" y="106.5" width="3" height="3" fill="#fff" stroke="#3030ff" stroke-width="1"/><rect x="1328.5" y="107.5" width="3" height="3" fill="#fff" stroke="#3030ff" stroke-width="1"/><rect x="1333.5" y="116.5" width="3" height="3" fill="#fff" stroke="#3030ff" stroke-width="1"/><path d="M1347 121l20-20M1347 101l20 20" stroke="#777" stroke-width="0.8"/><rect x="1355.5" y="109.5" width="3" height="3" fill="#fff" stroke="#3030ff" stroke-width="1"/><rect x="1363" y="100" width="3" height="3" fill="#fff" stroke="#333"/><rect x="1347" y="118" width="3" height="3" fill="#fff" stroke="#333"/><path d="M1378 110.5h19" stroke="#333" stroke-width="1.3"/><path d="M1378 110.5l3-2v4zM1397 110.5l-3-2v4z" fill="#333"/><rect x="1385.5" y="109.0" width="3" height="3" fill="#fff" stroke="#3030ff" stroke-width="1"/><path d="M1409 121l20-20" stroke="#333" stroke-width="0.8"/><path d="M1409 121l2-4 2 2z" fill="#333"/><path d="M1429 101l-4 1 2 2z" fill="#333"/><path d="M1415 121l16-16" stroke="#aa0" stroke-dasharray="1.5 1.5"/><rect x="1415.5" y="110.5" width="3" height="3" fill="#fff" stroke="#3030ff" stroke-width="1"/><circle cx="1422" cy="113" r="1.5" fill="#fff" stroke="#e00"/><circle cx="1447" cy="110.5" r="10" fill="none" stroke="#777" stroke-dasharray="2 1.5"/><rect x="1445.5" y="109.0" width="3" height="3" fill="#fff" stroke="#3030ff" stroke-width="1"/><rect x="1454.5" y="109.0" width="3" height="3" fill="#fff" stroke="#3030ff" stroke-width="1"/><circle cx="1478" cy="110.5" r="10" fill="none" stroke="#777" stroke-dasharray="2 1.5"/><rect x="1469.5" y="109.0" width="3" height="3" fill="#fff" stroke="#3030ff" stroke-width="1"/><rect x="1483.5" y="109.0" width="3" height="3" fill="#fff" stroke="#3030ff" stroke-width="1"/><circle cx="1508" cy="110.5" r="10" fill="none" stroke="#777" stroke-dasharray="2 1.5"/><rect x="1500.5" y="101.5" width="3" height="3" fill="#fff" stroke="#3030ff" stroke-width="1"/><rect x="1513.5" y="101.5" width="3" height="3" fill="#fff" stroke="#3030ff" stroke-width="1"/><rect x="1507.0" y="118.5" width="3" height="3" fill="#fff" stroke="#3030ff" stroke-width="1"/><circle cx="1538" cy="110.5" r="10" fill="none" stroke="#222"/><path d="M1528 121l20-20" stroke="#333"/><path d="M1546.5 110.5L1549.0 110.5" stroke="#222"/><path d="M1544.0128002879212 116.5080140393956L1545.7812709608393 118.27507699215903" stroke="#222"/><path d="M1538.0067687770413 118.9999973049206L1538.008759593818 121.49999651225018" stroke="#222"/><path d="M1531.99677601903 116.51758272351168L1530.23112190698 118.28745999513275" stroke="#222"/><path d="M1529.500010780316 110.51353754979014L1527.000013950997 110.51751918208136" stroke="#222"/><path d="M1531.9776386568658 104.50156988431795L1530.206355908885 102.73732573264675" stroke="#222"/><path d="M1537.9796936860455 102.0000242557044L1537.973721240765 99.5000313897351" stroke="#222"/><path d="M1543.9936324465716 104.47286385624116L1545.7564655190927 102.70017675513562" stroke="#222"/><rect x="1536.5" y="109.0" width="3" height="3" fill="#fff" stroke="#3030ff" stroke-width="1"/><path d="M1565 117l13-13" stroke="#555" stroke-dasharray="1.5 1.5"/><rect x="1564.5" y="114.5" width="3" height="3" fill="#fff" stroke="#3030ff" stroke-width="1"/><rect x="1571.5" y="107.5" width="3" height="3" fill="#fff" stroke="#3030ff" stroke-width="1"/><path d="M1603 99v17" stroke="#555" stroke-dasharray="1.5 1.5"/><rect x="1601.5" y="116.0" width="3" height="3" fill="#fff" stroke="#3030ff" stroke-width="1"/><path d="M1623 110.5h19" stroke="#555" stroke-dasharray="1.5 1.5"/><rect x="1621.5" y="109.0" width="3" height="3" fill="#fff" stroke="#3030ff" stroke-width="1"/><path d="M1152.5 127V160" stroke="#a8a8a8"/><path d="M1158.5 128V159" stroke="#b0b0b0" stroke-dasharray="2 2"/><path d="M1495.5 130V158" stroke="#a8a8a8"/><path d="M1651.5 130V158" stroke="#a8a8a8"/><path d="M1718.5 130V158" stroke="#a8a8a8"/><g transform="translate(25.5 144.5)"><circle r="7" fill="none" stroke="#9a9a86" stroke-width="3" stroke-dasharray="2.5 1.9"/><circle r="5" fill="none" stroke="#b8b8a8" stroke-width="2"/><circle r="2" fill="#fff" stroke="#bbb"/></g><path d="M43.5 150.5l6-4h13l-6 4zM43.5 146.5l6-4h13l-6 4z" fill="#fff" stroke="#333"/><path d="M43.5 142.5l6-4h13l-6 4z" fill="#aaa" stroke="#333"/><path d="M50 138l5-5h8v4l-6 2" fill="#fff" stroke="#333"/><path d="M66.5 133v6" stroke="#3a3ab8" stroke-width="2"/><path d="M1094 142l13 13" stroke="#0c0"/><path d="M1103 146l9-9 3 3-9 9-4 1z" fill="#fff" stroke="#333"/><path d="M1111 138l3 3" stroke="#333"/><ellipse cx="1136" cy="151" rx="11" ry="3.5" fill="none" stroke="#111" stroke-width="1.2"/><path d="M1128 138c0 5 2 11 8 12s8-7 8-12" fill="none" stroke="#111" stroke-width="1.2"/><ellipse cx="1136" cy="138" rx="8" ry="2.5" fill="none" stroke="#111" stroke-width="1.2"/><path d="M1144 141c4 0 4 5 0 6M1129 143h14" fill="none" stroke="#111" stroke-width="1.2"/><path d="M1149 158h3v-3z" fill="#000"/><path d="M1168 153l20-20" stroke="#333"/><path d="M1168 155.5l20-20" stroke="#e02020"/><path d="M1167 148l8-8M1175 140h-4M1175 140v4" fill="none" stroke="#3030ff"/><path d="M1183 144l-8 8M1175 152h4M1175 152v-4" fill="none" stroke="#3030ff"/><path d="M1201 144.5h9" stroke="#333"/><path d="M1213 140l-3 9" stroke="#3030ff"/><path d="M1213 144.5h4" stroke="#e02020" stroke-dasharray="1 1"/><path d="M1241 133l7 7M1244 136l4-4" stroke="#e02020" stroke-width="1"/><path d="M1244 136l4-4" stroke="#333"/><path d="M1228 145l8 8M1228 154l4-4" stroke="#e02020"/><path d="M1228 154l4-4" stroke="#333"/><path d="M1259 149a9 9 0 0 1 9-15" fill="none" stroke="#e02020" stroke-dasharray="2 1"/><path d="M1268 134a9 9 0 0 1 2 20" fill="none" stroke="#333"/><path d="M1263 146l10-10" stroke="#999" stroke-dasharray="1 1"/><path d="M1287 146l12-12" stroke="#e02020"/><path d="M1294 139l12 14" stroke="#333"/><path d="M1287 134l6 6" stroke="#999" stroke-dasharray="1 1"/><path d="M1324 148l10-10M1327 151l10-10" stroke="#333"/><path d="M1322 146l10-10M1329 153l10-10" stroke="#e02020"/><path d="M1320 140l4-4M1320 140h3M1320 140v-3" fill="none" stroke="#3030ff"/><path d="M1346.5 133h9l5 14h-14z" fill="none" stroke="#333"/><path d="M1355.5 133l5 14h-14" fill="none" stroke="#e02020"/><rect x="1357.5" y="142.5" width="12" height="10" fill="none" stroke="#333" stroke-dasharray="1 1"/><path d="M1361 135l4 4h-3M1365 139v-3" fill="none" stroke="#3030ff"/><path d="M1380 141l-2 13M1396 135l-3 14" stroke="#333" stroke-dasharray="5 1"/><path d="M1380 153l10-4M1390 149h-3M1390 149l-2 2" fill="none" stroke="#3030ff"/><path d="M1417 133a10 10 0 0 1 0 21a10 10 0 0 1 0-21" fill="none" stroke="#333"/><path d="M1408 140a10 10 0 0 1 17-5" fill="none" stroke="#e02020"/><path d="M1437 134l9 20" stroke="#333"/><path d="M1437 134l8 16" stroke="#e02020"/><path d="M1437 134l22 6" stroke="#333"/><path d="M1437 134l10 2" stroke="#e02020"/><rect x="1465.5" y="140.5" width="17" height="13" fill="none" stroke="#333"/><circle cx="1482" cy="140" r="7" fill="none" stroke="#0c0"/><path d="M1475 140a7 7 0 0 0 7 7" fill="none" stroke="#e02020"/><path d="M1502.5 132v10c0 6 3 10 9 10" fill="none" stroke="#333"/><path d="M1502.5 142c0 6 3 10 9 10" fill="none" stroke="#e02020"/><path d="M1511 152.5h12" stroke="#333"/><path d="M1532 153h3M1535 153l13-14M1548 139v-4" fill="none" stroke="#333"/><path d="M1535 152l12-12" stroke="#e02020"/><path d="M1551 138h4M1553 138v6M1551 144h4M1551 148h4M1553 148v-3M1537 157h8M1537 155v4M1545 155v4" fill="none" stroke="#3030ff"/><path d="M1562 153h3M1565 153l13-14M1578 139v-4" fill="none" stroke="#333"/><path d="M1565 152l12-12" stroke="#e02020"/><path d="M1581 138l4 4M1581 138h3M1581 138v3M1567 157h8M1567 155v4M1575 155v4" fill="none" stroke="#3030ff"/><path d="M1592 153h3M1595 153l13-14M1608 139v-4" fill="none" stroke="#333"/><path d="M1595 152l12-12" stroke="#e02020"/><path d="M1611 138l4 4M1611 138h3M1611 138v3M1594 150l12-12M1594 150h3M1594 150v-3" fill="none" stroke="#3030ff"/><path d="M1625.5 143.5h14v9h-14zM1629.5 146.5h7v4h-7zM1632 134v8M1630 140l2 3 2-3" fill="none" stroke="#bbb"/><path d="M1659 152l6-6c2-2 3 2 5 1s2-4 4-5l7-7" fill="none" stroke="#333"/><g fill="none" stroke="#333" stroke-width="0.8"><rect x="1657.5" y="150.5" width="2" height="2"/><rect x="1679.5" y="133.5" width="2" height="2"/><rect x="1664.5" y="133.5" width="2" height="2"/><rect x="1669.5" y="154.5" width="2" height="2"/><rect x="1663.5" y="140.5" width="2" height="2"/><rect x="1668.5" y="147.5" width="2" height="2"/></g><path d="M1689 153c2-10 6-15 11-15s9 5 11 15M1692 153c2-8 4-12 8-12s6 4 8 12" fill="none" stroke="#bbb"/><path d="M1726 133l8 8-8 8M1745 133l-8 8M1735 144l10 9" fill="none" stroke="#aaa"/><path d="M1759 131v19M1767 131v19M1755 137h16M1755 146h16" stroke="#aaa"/><path d="M1789.5 137.5h5v5h-5z" fill="none" stroke="#333" stroke-dasharray="2 1"/><path d="M1795 136c3 0 4 2 5 5" fill="none" stroke="#0d0"/><path d="M1798 140l2 2 2-2" fill="none" stroke="#0d0"/><rect x="1796.5" y="145.5" width="7" height="6" fill="none" stroke="#e33"/><path d="M1823 136h6l2 3 3 1v6l-3 1-2 3h-6l-2-3-3-1v-6l3-1z" fill="#777" stroke="#444"/><rect x="1824" y="137.5" width="4" height="11" fill="#fff" stroke="#e33"/><rect x="1819" y="141" width="2.5" height="3" fill="#e33"/><rect x="1830.5" y="141" width="2.5" height="3" fill="#e33"/></svg><!--/ROW23-->
<!-- ===== left toolbar ===== -->
<div style="left:0;top:161px;width:34px;height:786px;background:#f0f0f0"></div>
<div style="left:0;top:161px;width:1px;height:786px;background:#f6f9fc"></div>
<div style="left:34px;top:161px;width:1px;height:786px;background:#a0a0a0"></div>
<div style="left:2px;top:171px;width:30px;height:29px;background:#c6ddf1;border:1px solid #99ccf5"></div>

<!--LEFT--><svg style="left:0;top:160px" width="36" height="620" viewBox="0 160 36 620"><path d="M3 166.5H31" stroke="#a8a8a8" stroke-dasharray="2 2" stroke-width="1.5"/><path d="M30 201h4v-4z" fill="#000"/><path d="M30 261h4v-4z" fill="#000"/><path d="M30 291h4v-4z" fill="#000"/><path d="M30 321h4v-4z" fill="#000"/><path d="M30 351h4v-4z" fill="#000"/><path d="M30 381h4v-4z" fill="#000"/><path d="M30 411h4v-4z" fill="#000"/><path d="M30 441h4v-4z" fill="#000"/><path d="M30 501h4v-4z" fill="#000"/><path d="M30 531h4v-4z" fill="#000"/><path d="M30 565h4v-4z" fill="#000"/><path d="M30 609h4v-4z" fill="#000"/><path d="M30 640h4v-4z" fill="#000"/><path d="M30 676h4v-4z" fill="#000"/><path d="M30 707h4v-4z" fill="#000"/><path d="M30 736h4v-4z" fill="#000"/><path d="M30 773h4v-4z" fill="#000"/><path d="M4 443.5H30" stroke="#a0a0a0"/><path d="M4 539.5H30" stroke="#a0a0a0"/><path d="M4 575.5H30" stroke="#a0a0a0"/><path d="M4 641.5H30" stroke="#a0a0a0"/><path d="M4 737.5H30" stroke="#a0a0a0"/><path d="M4 547.5H30M4 568.5H30" stroke="#b8b8b8"/><path d="M1 771.5H34" stroke="#d8d8d8"/><path d="M11.5 176.5v16l4-3.5 3 6 2.5-1.2-3-5.8h5.5z" fill="#fff" stroke="#000" stroke-width="1.3"/><path d="M17.5 190l2 4.5" stroke="#000" stroke-width="2.5"/><rect x="11" y="207" width="4.5" height="4.5" fill="#4040ff"/><path d="M16 210l3-5M12 212c-3 2-5 6-5 10" fill="none" stroke="#333"/><path d="M16.5 214v11l2.5-2.5 2 4 1.5-.8-2-4h3.5z" fill="#fff" stroke="#333"/><path d="M5 257.5l22-22" stroke="#999" stroke-dasharray="1.5 1.5"/><rect x="10.0" y="250.0" width="3" height="3" fill="#fff" stroke="#3030ff" stroke-width="1"/><rect x="19.5" y="240.0" width="3" height="3" fill="#fff" stroke="#3030ff" stroke-width="1"/><path d="M8 284l17-17" stroke="#333"/><rect x="6.5" y="282.5" width="3" height="3" fill="#fff" stroke="#3030ff" stroke-width="1"/><rect x="24.0" y="265.5" width="3" height="3" fill="#fff" stroke="#3030ff" stroke-width="1"/><circle cx="16.5" cy="306" r="10" fill="none" stroke="#333"/><rect x="15.0" y="304.5" width="3" height="3" fill="#fff" stroke="#3030ff" stroke-width="1"/><rect x="24.5" y="304.5" width="3" height="3" fill="#fff" stroke="#3030ff" stroke-width="1"/><path d="M6.5 344c2-10 5-15 10-15s8 5 10 15" fill="none" stroke="#333"/><rect x="8.0" y="325.5" width="3" height="3" fill="#fff" stroke="#3030ff" stroke-width="1"/><rect x="22.0" y="325.5" width="3" height="3" fill="#fff" stroke="#3030ff" stroke-width="1"/><rect x="5.0" y="342.5" width="3" height="3" fill="#fff" stroke="#3030ff" stroke-width="1"/><rect x="25.0" y="342.5" width="3" height="3" fill="#fff" stroke="#3030ff" stroke-width="1"/><circle cx="17" cy="365" r="2" fill="#444"/><path d="M7 405L16.5 388L26 405M10.5 399h12" fill="none" stroke="#333" stroke-width="2"/><rect x="12" y="423" width="15" height="13" fill="#4040ff"/><rect x="7.5" y="416.5" width="9" height="7" fill="#eee" stroke="#333"/><path d="M10 418l3 2M10 418h3M10 418v2" stroke="#e33" fill="none"/><path d="M16 416c5 0 8 3 7 8l-6 7" fill="none" stroke="#e33"/><text x="6" y="467" font-family="Liberation Sans" font-size="9.5" fill="#333">3D</text><path d="M16.5 453l9 9-8 9H7" fill="none" stroke="#333"/><rect x="15.0" y="451.5" width="3" height="3" fill="#fff" stroke="#3030ff" stroke-width="1"/><rect x="24.0" y="460.5" width="3" height="3" fill="#fff" stroke="#3030ff" stroke-width="1"/><rect x="16.0" y="469.0" width="3" height="3" fill="#fff" stroke="#3030ff" stroke-width="1"/><rect x="5.5" y="469.0" width="3" height="3" fill="#fff" stroke="#3030ff" stroke-width="1"/><circle cx="16" cy="492.5" r="9.5" fill="#b8b8b8" stroke="#555"/><circle cx="13.5" cy="494" r="5" fill="#f0f0f0"/><rect x="14.0" y="491.0" width="3" height="3" fill="#fff" stroke="#3030ff" stroke-width="1"/><rect x="24.0" y="491.0" width="3" height="3" fill="#fff" stroke="#3030ff" stroke-width="1"/><ellipse cx="18" cy="519" rx="6" ry="3" transform="rotate(20 18 519)" fill="#fff" stroke="#333"/><path d="M12.5 517l-3 9M23.5 521l-3 8" stroke="#333"/><ellipse cx="15" cy="527.5" rx="6" ry="3" transform="rotate(20 15 527.5)" fill="none" stroke="#33f" stroke-width="1.2"/><path d="M13 526l5 1" stroke="#0aa"/><path d="M20 521l-2 7" stroke="#999"/><path d="M16.5 549v18M6.5 558h20" stroke="#444"/><path d="M13.5 552l3-3 3 3M13.5 564l3 3 3-3M9.5 555l-3 3 3 3M23.5 555l3 3-3 3" fill="none" stroke="#444"/><path d="M10.5 590l5-5h4l3 3v10l-8 5-4-2z" fill="#aaa" stroke="#333"/><path d="M10.5 590h5l4-5" fill="#ddd" stroke="#333"/><path d="M10.5 590v11M15.5 590l-1 13" stroke="#333"/><rect x="10.5" y="590" width="5" height="11" fill="#fff" stroke="#333"/><rect x="20.0" y="594.5" width="3" height="3" fill="#fff" stroke="#3030ff" stroke-width="1"/><rect x="11.5" y="601.5" width="3" height="3" fill="#fff" stroke="#3030ff" stroke-width="1"/><g transform="translate(17 625)"><circle r="8" fill="#d83a3a" stroke="#7a1a1a" stroke-width="0.8"/><path d="M0-11v4M0 11v-4M-11 0h4M11 0h-4M-8-8l3 3M8 8l-3-3M-8 8l3-3M8-8l-3 3" stroke="#7a1a1a" stroke-width="2"/><circle r="4.5" fill="#fff" stroke="#7a1a1a"/></g><rect x="5.5" y="649.5" width="23" height="22" fill="#c8c8c8" stroke="#333"/><rect x="6" y="650" width="22" height="3" fill="#2a2a8a"/><rect x="21" y="650.5" width="2" height="2" fill="#fff"/><rect x="24" y="650.5" width="3" height="2" fill="#fff"/><path d="M9.5 657.5h9v6h-9zM13.5 660.5h9v7h-9z" fill="none" stroke="#3a3ab8"/><rect x="8" y="656" width="3" height="3" fill="#333"/><rect x="20" y="656" width="3" height="3" fill="#333"/><rect x="8" y="667" width="3" height="3" fill="#333"/><rect x="20" y="667" width="3" height="3" fill="#333"/><g fill="none" stroke="#aaa"><rect x="5.5" y="679.5" width="10" height="10"/><rect x="14.5" y="688.5" width="6" height="6"/><rect x="17.5" y="691.5" width="6" height="6"/></g><g fill="#aaa"><rect x="13" y="686" width="2.5" height="2.5"/><rect x="26" y="686" width="2.5" height="2.5"/><rect x="13" y="699" width="2.5" height="2.5"/><rect x="26" y="699" width="2.5" height="2.5"/></g><path d="M8 682l5 5" stroke="#aaa"/><rect x="10.5" y="712.5" width="5" height="6" fill="#40e0e0" stroke="#333"/><rect x="11" y="716" width="4" height="2.5" fill="#e33"/><path d="M10 720.5h6" stroke="#333"/><rect x="19.5" y="712.5" width="5" height="6" fill="#40e0e0" stroke="#333"/><rect x="20" y="716" width="4" height="2.5" fill="#0c0"/><path d="M19 720.5h6" stroke="#333"/><rect x="10.5" y="723.5" width="5" height="6" fill="#40e0e0" stroke="#333"/><rect x="11" y="727" width="4" height="2.5" fill="#e33"/><path d="M10 731.5h6" stroke="#333"/><rect x="19.5" y="723.5" width="5" height="6" fill="#40e0e0" stroke="#333"/><rect x="20" y="727" width="4" height="2.5" fill="#0c0"/><path d="M19 731.5h6" stroke="#333"/><rect x="11.5" y="753.5" width="16" height="14" fill="#fff" stroke="#333"/><circle cx="18.5" cy="761" r="4.5" fill="none" stroke="#333"/><path d="M14 761h9M18.5 756.5v9" stroke="#333"/><path d="M5 746l9 9M14 746l-9 9M9.5 744v13M3 750.5h13" stroke="#ee4" stroke-width="1"/></svg><!--/LEFT-->
<!-- ===== rulers ===== -->
<div style="left:35px;top:161px;width:1538px;height:17px;background:#f0f0f0"></div>
<div style="left:35px;top:161px;width:1538px;height:1px;background:#fff"></div>
<div style="left:35px;top:176px;width:1538px;height:2px;background:#a0a0a0"></div>
<div style="left:36px;top:163px;width:14px;height:15px;background:#bcbcb0"></div>
<div style="left:35px;top:178px;width:14px;height:744px;background:#f0f0f0"></div>
<div style="left:49px;top:176px;width:2px;height:746px;background:#a0a0a0"></div><div style="left:49px;top:922px;width:1px;height:25px;background:#b0b0b0"></div>

<!-- ===== canvas ===== -->
<div style="left:51px;top:178px;width:1499px;height:743px;background:#fff"></div>
<div style="left:35px;top:921px;width:1538px;height:1px;background:#e3e3e3"></div>


<!-- ===== rulers + drawing svg ===== -->
<svg style="left:0;top:0" width="1920" height="1030">
 <g stroke="#000" stroke-width="1" fill="none">
  <path d="M59.5 174V177M91.5 172V177M123.5 174V177M155.5 174V177M187.5 174V177M219.5 174V177M251.5 164V177M283.5 174V177M315.5 174V177M347.5 174V177M379.5 174V177M411.5 172V177M443.5 174V177M475.5 174V177M507.5 174V177M539.5 174V177M571.5 164V177M603.5 174V177M635.5 174V177M667.5 174V177M699.5 174V177M731.5 172V177M763.5 174V177M795.5 174V177M827.5 174V177M859.5 174V177M891.5 164V177M923.5 174V177M955.5 174V177M987.5 174V177M1019.5 174V177M1051.5 172V177M1083.5 174V177M1115.5 174V177M1147.5 174V177M1179.5 174V177M1211.5 164V177M1243.5 174V177M1275.5 174V177M1307.5 174V177M1339.5 174V177M1371.5 172V177M1403.5 174V177M1435.5 174V177M1467.5 174V177M1499.5 174V177M1529.5 164V177M1561.5 174V177"/>
  <path d="M47 213.5H49M45 245.5H49M47 277.5H49M47 309.5H49M47 341.5H49M47 373.5H49M37 405.5H49M47 437.5H49M47 469.5H49M47 501.5H49M47 533.5H49M45 565.5H49M47 597.5H49M47 629.5H49M47 661.5H49M47 693.5H49M37 725.5H49M47 757.5H49M47 789.5H49M47 821.5H49M47 853.5H49M45 885.5H49M47 917.5H49"/>
 </g>
 <path d="M35 542.5H49M1256.5 162V177" stroke="#e020e0" stroke-width="1"/>
 <!-- ruler corner icon -->
 <path d="M42 177V167M39 170l3-3.5 3 3.5M42 176.5H49M47 174.5l2 2" stroke="#000" stroke-width="1.6" fill="none"/>
 <g font-family="Liberation Sans" font-size="10" fill="#000">
  <text x="253" y="173">12000 mm</text>
  <text x="573" y="173">13000 mm</text>
  <text x="893" y="173">14000 mm</text>
  <text x="1213" y="173">15000 mm</text>
  <text x="1531" y="173">16000 mm</text>
  <text transform="translate(47.5 399) rotate(-90)">-5000 mm</text>
  <text transform="translate(47.5 719) rotate(-90)">-6000 mm</text>
 </g>
 <!-- centerlines -->
 <g stroke="#b4d2d2" stroke-width="1" fill="none" stroke-dasharray="25 5 1 6">
  <path d="M543.5 183V921"/>
  <path d="M588.5 191V921" stroke-dashoffset="0"/>
  <path d="M639.5 186V921"/>
  <path d="M694.5 188V921"/>
  <path d="M713.5 184V440"/>
  <path d="M1028.5 185V921"/>
  <path d="M1058.5 184V921"/>
 </g>
 <path d="M713.5 440V921" stroke="#b4d2d2" stroke-width="1"/>
 <!-- top view (red) -->
 <path d="M543.5 411.5C565 400 600 394 660 389.4L750 390.4L790 390.6L861.5 394L929.8 399.4L987 401.8L1029 405.6L1058 411L1001 418.8L950 421L849 428.2L790 431.6L750 433L660 433.4C610 431 570 424 543.5 411.5Z" stroke="#ff1010" stroke-width="1.3" fill="none"/>
 <g stroke="#ff8000" stroke-width="1.1" fill="none">
  <!-- fuselage outline -->
  <path d="M543.5 315.6C565 306 595 293 617 284.5C632 278 648 270 668 269.5L700 270.3L740 273L770 274.5L870 280L965 283.5C972 283 976 279 976.4 274L986.4 186L1032.6 189.5L1052.7 269L1026.7 286.4"/>
  <path d="M1029 190.5L1048 266L1017 287"/>
  <path d="M543.5 316.5C552 322 565 328 580 331.5C600 336 620 338.5 645 339.4L694 339.6L720 338.5L770 336.5L860 327L962 318L1001.7 314L1058 303.5L1058 297C1057 291 1054 287 1050.8 286.4L1001.7 287.5L975 284.3"/>
  <path d="M574 315.5H603M588.5 296V335M619 307.5H659M639.5 275V339M633.5 274L639 305"/>
  <path d="M585 295L635 305H642.5L691 296M694.4 294L707.5 269.4"/>
  <path d="M672 304.5H735M716 300.5H810M702.5 335H750V339"/>
  <path d="M694.4 270V340M713.5 271V339M804.5 276V332M859 279V327M962 283.5V318M1001.7 186V314M1034.5 288V311M1050.5 287V308"/>
  <path d="M984.5 207.3H1032M983 223.3H1001.7M980.7 240.2H1001.7M979 257.3H1046M977 273.3H1038M1001.7 224L1040 233L1001.7 242.5"/>
  <!-- wing -->
  <path d="M713.5 440.3H809.5L753 914H713.5"/>
  <path d="M771.5 655.5H783.8M771.5 655.5L739 912M754 761.4H771M739 912H756"/>
  <path d="M713.5 400V921" stroke-dasharray="12 24" stroke-dashoffset="12" stroke-width="1"/>
  <!-- horizontal tail -->
  <path d="M1002.4 418.6L1007 525Q1007.5 529.5 1012 529.5H1036Q1040.5 529.5 1041 525L1051.5 416.5L1002.4 418.6M1028 414.5H1049V420"/>
  <path d="M1003 428.6H1050.5M1004 448.4H1048M1005 468.6H1046M1005.5 488.3H1044M1006.5 508.7H1042.5M1044 415L1042.5 468H1047"/>
 </g>
 <g stroke="#1a1a1a" stroke-width="1.1" fill="none">
  <ellipse cx="588.4" cy="315.5" rx="15" ry="19"/>
  <ellipse cx="638.5" cy="307" rx="20.5" ry="32"/>
  <ellipse cx="694" cy="305" rx="22" ry="35"/>
  <ellipse cx="713" cy="305" rx="22" ry="34"/>
 </g>
 <g stroke="#ff1010" stroke-width="1.1" fill="none">
  <ellipse cx="805" cy="304.5" rx="21" ry="28.5"/>
  <ellipse cx="859.5" cy="303" rx="17" ry="24"/>
  <ellipse cx="962" cy="300.5" rx="11" ry="17"/>
  <ellipse cx="1001.8" cy="300.4" rx="7.8" ry="13.4"/>
  <ellipse cx="1033.5" cy="300.5" rx="6.5" ry="10.5"/>
  <ellipse cx="1049.5" cy="297" rx="5.7" ry="10"/>
 </g>
 <ellipse cx="1019" cy="291.8" rx="18" ry="3" stroke="#1010ff" stroke-width="1.1" fill="none"/>
 <path d="M1003 292H1050" stroke="#1010ff" stroke-width="1.8"/>
</svg>

<!-- vertical scrollbar -->
<div style="left:1551px;top:178px;width:22px;height:744px;background:#f0f0f0"></div>
<div style="left:1553px;top:670px;width:17px;height:66px;background:#cdcdcd"></div>
<svg style="left:1555px;top:182px" width="12" height="10"><path d="M1.5 7.5l4.5-4.5 4.5 4.5" fill="none" stroke="#606060" stroke-width="1.6"/></svg>
<svg style="left:1555px;top:907px" width="12" height="10"><path d="M1.5 2.5l4.5 4.5 4.5-4.5" fill="none" stroke="#505050" stroke-width="2"/></svg>

<!-- tabs + h-scroll -->
<div style="left:136px;top:923px;width:106px;height:1px;background:#404040"></div>
<div style="left:64px;top:923px;width:74px;height:24px;background:#f7f7f7;border-right:1px solid #404040;border-bottom:1px solid #404040;border-radius:0 0 3px 3px"></div>
<div class="t" style="left:87px;top:924px;font-size:15px">Model</div>
<svg style="left:68px;top:926px" width="16" height="17"><path d="M1.5 5.5l3-3h6l2 2v6l-3 3h-6l-2-2z" fill="#fff" stroke="#222"/><path d="M1.5 5.5h8l3-3M9.5 5.5v8" fill="none" stroke="#222"/><circle cx="10" cy="11" r="4.5" fill="#888" stroke="#111"/><circle cx="9" cy="10" r="2" fill="#ddd"/></svg>
<div style="left:139px;top:924px;width:79px;height:20px;background:#dedede;border:1px solid #d0d0d0;border-radius:0 0 3px 3px"></div>
<div class="t" style="left:161px;top:924px;font-size:14.5px;color:#808080">Paper 1</div>
<svg style="left:144px;top:927px" width="13" height="16"><path d="M1.5 1.5h6l3 3v10h-9z" fill="#fff" stroke="#222"/><path d="M7.5 1.5v3h3" fill="none" stroke="#222"/><text x="3.5" y="12.5" font-family="Liberation Sans" font-size="7" font-weight="bold" fill="#1a1a8a">1</text></svg>
<div class="vl" style="left:245px;top:924px;height:23px;background:#a0a0a0"></div>
<svg style="left:250px;top:928px" width="10" height="12"><path d="M7 2L3 6l4 4" fill="none" stroke="#404040" stroke-width="1.8"/></svg>
<svg style="left:1535px;top:928px" width="10" height="12"><path d="M3 2l4 4-4 4" fill="none" stroke="#404040" stroke-width="1.8"/></svg>
<div style="left:1157px;top:927px;width:107px;height:18px;background:#cdcdcd"></div>
<div style="left:1571px;top:923px;width:1px;height:24px;background:#e6e6e6"></div><div style="left:1549px;top:178px;width:1px;height:744px;background:#e6e6e6"></div><div style="left:35px;top:924px;width:1516px;height:1px;background:#fafafa"></div>


<!-- ===== right panel: Tools ===== -->
<div style="left:1574px;top:161px;width:2px;height:786px;background:#f0f0f0"></div>
<div style="left:1576px;top:161px;width:284px;height:1px;background:#3c3c3c"></div>
<div style="left:1576px;top:161px;width:1px;height:28px;background:#3c3c3c"></div>
<div style="left:1859px;top:161px;width:1px;height:28px;background:#3c3c3c"></div>
<div style="left:1577px;top:162px;width:282px;height:27px;background:linear-gradient(#bccbdc,#dce6f1)"></div>
<div class="t" style="left:1580px;top:166px">Tools</div>
<div style="left:1843px;top:168px;width:14px;height:14px;background:#a9a9a9;border:1px solid #e6e6e6"></div>
<svg style="left:1843px;top:168px" width="14" height="14"><path d="M4 4l6 6M10 4l-6 6" stroke="#fff" stroke-width="2"/></svg>
<svg style="left:1822px;top:167px" width="18" height="17"><circle cx="11" cy="6" r="4.5" fill="#d8d8d8" stroke="#9a9a9a" stroke-width="0.8"/><ellipse cx="8" cy="9" rx="5" ry="3.5" fill="#c8c8c8" stroke="#9a9a9a" stroke-width="0.8" transform="rotate(-35 8 9)"/><path d="M5 12l-3.5 3.5" stroke="#888" stroke-width="1.4"/></svg>
<div style="left:1576px;top:189px;width:284px;height:31px;background:#fff;border:1px solid #c4c4c4;border-top:none"></div>
<div style="left:1578px;top:195px;width:22px;height:21px;background:#cce4f7;border:1px solid #99ccf5"></div>
<div class="vl" style="left:1645px;top:195px;height:21px;background:#a0a0a0"></div>
<div class="combo" style="left:1649px;top:192px;width:100px;height:26px;border-color:#bdbdbd"><i style="height:24px"></i></div>
<div class="t" style="left:1652px;top:196px">Sketch</div>
<div style="left:1576px;top:220px;width:264px;height:468px;background:#f0f0f0"></div>
<div style="left:1576px;top:220px;width:2px;height:468px;background:#c5d6ea"></div>
<div style="left:1838px;top:220px;width:2px;height:468px;background:#c5d6ea"></div>
<!-- sections -->
<div class="sec" style="top:221px;height:128px"><div class="sech"></div><div class="sect">Snap Modes</div><div class="chev"></div></div>
<div class="sec" style="top:349px;height:100px"><div class="sech"></div><div class="sect">Line</div><div class="chev"></div></div>
<div class="sec" style="top:449px;height:100px"><div class="sech"></div><div class="sect">Circle/Ellipse</div><div class="chev"></div></div>
<div class="sec" style="top:549px;height:100px"><div class="sech"></div><div class="sect">Arc</div><div class="chev"></div></div>
<div class="sec" style="top:649px;height:40px;border-bottom:none;border-radius:3px 3px 0 0"><div class="sech"></div><div class="sect">Curve</div><div class="chev"></div></div>
<svg style="left:1816px;top:226px" width="17" height="480"><g fill="none" stroke="#1f6fd0" stroke-width="1.5"><path d="M5 9l3.5-3.5L12 9M5 13l3.5-3.5L12 13"/><path d="M5 137l3.5-3.5L12 137M5 141l3.5-3.5L12 141"/><path d="M5 237l3.5-3.5L12 237M5 241l3.5-3.5L12 241"/><path d="M5 337l3.5-3.5L12 337M5 341l3.5-3.5L12 341"/><path d="M5 437l3.5-3.5L12 437M5 441l3.5-3.5L12 441"/></g></svg>
<!-- panel scrollbar -->
<div style="left:1840px;top:220px;width:20px;height:468px;background:#f0f0f0"></div>
<div style="left:1841px;top:242px;width:17px;height:338px;background:#cdcdcd"></div>
<svg style="left:1843px;top:227px" width="12" height="10"><path d="M1.5 7.5l4.5-4.5 4.5 4.5" fill="none" stroke="#505050" stroke-width="1.6"/></svg>
<svg style="left:1843px;top:670px" width="12" height="10"><path d="M1.5 2.5l4.5 4.5 4.5-4.5" fill="none" stroke="#505050" stroke-width="1.6"/></svg>
<!-- orange snap buttons -->
<div class="ob" style="left:1617px;top:256px"></div>
<div class="ob" style="left:1645px;top:256px"></div>
<div class="ob" style="left:1701px;top:256px"></div>
<div class="ob" style="left:1785px;top:256px"></div>
<div class="ob" style="left:1589px;top:312px"></div>
<div class="ob" style="left:1617px;top:312px"></div>
<div class="ob" style="left:1645px;top:312px"></div>
<!-- tabs -->
<div style="left:1576px;top:689px;width:66px;height:27px;background:#fff;border:1px solid #e0e0e0;border-top:none"></div>
<div class="t" style="left:1600px;top:693px">Tools</div>
<div style="left:1642px;top:690px;width:67px;height:23px;background:#ececec;border:1px solid #d8d8d8;border-left:none"></div>
<div class="t" style="left:1665px;top:692px">Blocks</div>
<!--PANEL--><svg style="left:1570px;top:190px" width="250" height="530" viewBox="1570 190 250 530"><g transform="translate(1602.5 269.5)"><path d="M-4-3l4-3 5 4c2 2 1 6-2 6s-4-1-6-3z" fill="#fff" stroke="#333" stroke-width="0.9"/><path d="M-3-5l-1-2h4" fill="none" stroke="#333" stroke-width="0.8"/><path d="M-7 4l2 2M-5 4l-2 2M5-8l1 1.5 1-1.5M6-6.5v2" stroke="#e00" stroke-width="0.9"/></g><g transform="translate(1630.5 269.5)"><rect x="-8" y="-1.5" width="2.5" height="2.5" fill="none" stroke="#777"/><path d="M-3 0h7M2-2l2 2-2 2" fill="none" stroke="#000" stroke-width="1.1"/><rect x="5.0" y="-1.5" width="3" height="3" fill="#fff" stroke="#ff0000" stroke-width="1.2"/></g><g transform="translate(1659 269.5)"><path d="M-7 4l5-5 4-4M-2-1l7 7" fill="none" stroke="#000"/><path d="M0-3l6 8" stroke="#fff" stroke-dasharray="1 1"/><rect x="-4.0" y="-3.0" width="3" height="3" fill="#fff" stroke="#ff0000" stroke-width="1.2"/><rect x="1" y="-7" width="2" height="2" fill="none" stroke="#333" stroke-width="0.8"/></g><g transform="translate(1687 269.5)"><path d="M-6 6l12-12" stroke="#000"/><rect x="-4.0" y="1.0" width="3" height="3" fill="#fff" stroke="#ff0000" stroke-width="1.2"/><rect x="1.0" y="-4.0" width="3" height="3" fill="#fff" stroke="#ff0000" stroke-width="1.2"/></g><g transform="translate(1715 269.5)"><path d="M-4 5a7 7 0 1 1 11-4" fill="none" stroke="#000" stroke-width="1.1"/><rect x="-1.5" y="-0.5" width="3" height="3" fill="#fff" stroke="#ff0000" stroke-width="1.2"/></g><g transform="translate(1743.5 269.5)"><path d="M-6-3.5l3-3h9v9l-3 3h-9zM-6-3.5h9v9M3-3.5l3-3" fill="none" stroke="#000" stroke-width="1.1"/><rect x="-1.5" y="-1.5" width="3" height="3" fill="#fff" stroke="#ff0000" stroke-width="1.2"/></g><g transform="translate(1771 269.5)"><circle r="6.5" fill="none" stroke="#000" stroke-dasharray="1.5 1"/><path d="M-6 0h12M0-6v12" stroke="#000" stroke-dasharray="1 1"/><path d="M-8-1.5l2 1.5-2 1.5M8-1.5l-2 1.5 2 1.5M-1.5 7l1.5-2 1.5 2M-1.5-7l1.5 2 1.5-2" fill="none" stroke="#e00"/></g><g transform="translate(1799 269.5)"><path d="M-7-7l14 14M7-7l-14 14" stroke="#000" stroke-width="1.1"/><rect x="-1.5" y="-2.0" width="3" height="3" fill="#fff" stroke="#ff0000" stroke-width="1.2"/></g><g transform="translate(1602.5 297.5)"><rect x="-6.5" y="-6.5" width="1" height="1" fill="#000"/><rect x="-6.5" y="-3.5" width="1" height="1" fill="#000"/><rect x="-6.5" y="-0.5" width="1" height="1" fill="#000"/><rect x="-6.5" y="2.5" width="1" height="1" fill="#000"/><rect x="-6.5" y="5.5" width="1" height="1" fill="#000"/><rect x="-3.5" y="-6.5" width="1" height="1" fill="#000"/><rect x="-3.5" y="-3.5" width="1" height="1" fill="#000"/><rect x="-3.5" y="-0.5" width="1" height="1" fill="#000"/><rect x="-3.5" y="2.5" width="1" height="1" fill="#000"/><rect x="-3.5" y="5.5" width="1" height="1" fill="#000"/><rect x="-0.5" y="-6.5" width="1" height="1" fill="#000"/><rect x="-0.5" y="-3.5" width="1" height="1" fill="#000"/><rect x="-0.5" y="-0.5" width="1" height="1" fill="#000"/><rect x="-0.5" y="2.5" width="1" height="1" fill="#000"/><rect x="-0.5" y="5.5" width="1" height="1" fill="#000"/><rect x="2.5" y="-6.5" width="1" height="1" fill="#000"/><rect x="2.5" y="-3.5" width="1" height="1" fill="#000"/><rect x="2.5" y="-0.5" width="1" height="1" fill="#000"/><rect x="2.5" y="2.5" width="1" height="1" fill="#000"/><rect x="2.5" y="5.5" width="1" height="1" fill="#000"/><rect x="5.5" y="-6.5" width="1" height="1" fill="#000"/><rect x="5.5" y="-3.5" width="1" height="1" fill="#000"/><rect x="5.5" y="-0.5" width="1" height="1" fill="#000"/><rect x="5.5" y="2.5" width="1" height="1" fill="#000"/><rect x="5.5" y="5.5" width="1" height="1" fill="#000"/><rect x="4.5" y="4.5" width="3" height="3" fill="#fff" stroke="#ff0000" stroke-width="1.2"/></g><g transform="translate(1630.5 297.5)"><path d="M-6 0l4-4 4 4-4 4z" fill="none" stroke="#000"/><path d="M0 2l6 6" stroke="#555"/><rect x="-2.5" y="-1.5" width="3" height="3" fill="#fff" stroke="#ff0000" stroke-width="1.2"/><rect x="4" y="-7" width="2.5" height="2.5" fill="none" stroke="#777"/></g><g transform="translate(1659 297.5)"><path d="M-6 5l3-9h6l3 9z" fill="none" stroke="#000" stroke-width="1.1"/><rect x="-1.5" y="-0.5" width="3" height="3" fill="#fff" stroke="#ff0000" stroke-width="1.2"/></g><g transform="translate(1687 297.5)"><path d="M-8 6l6-7c2-3 5-4 9-4M-2 1l1 5" fill="none" stroke="#000" stroke-width="1.1"/><rect x="-2.5" y="-2.5" width="3" height="3" fill="#fff" stroke="#ff0000" stroke-width="1.2"/></g><g transform="translate(1715 297.5)"><path d="M-7 5h14M0-6v11" stroke="#000" stroke-width="1.1" stroke-dasharray="2 1"/><path d="M-7 5h14" stroke="#000" stroke-width="1.1"/><path d="M-2-7l4 3M2-7l-4 3" stroke="#e00" stroke-width="1.3"/><rect x="-1.5" y="3.5" width="3" height="3" fill="#fff" stroke="#ff0000" stroke-width="1.2"/></g><g transform="translate(1743.5 297.5)"><path d="M-7 0h14M0-6v11" stroke="#000" stroke-width="1.1"/><path d="M-2-7l4 3M2-7l-4 3" stroke="#e00" stroke-width="1.3"/><rect x="-1.5" y="5" width="3" height="3" fill="#fff" stroke="#e00" stroke-width="1.2"/></g><g transform="translate(1771 297.5)"><path d="M-7 0h14M0-7v14M-5-5l10 10M5-5l-10 10" stroke="#888"/><path d="M5-8h2v2" stroke="#e00" fill="none"/></g><g transform="translate(1799 297.5)"><path d="M-7 6h10l-3-13z" fill="#888"/><path d="M0-5l5 7-4 4" fill="none" stroke="#888"/><rect x="-1.5" y="1.5" width="3" height="3" fill="#fff" stroke="#ff0000" stroke-width="1.2"/></g><g transform="translate(1602.5 326)"><path d="M-4 2v-5a4 4 0 0 1 8 0v5" fill="none" stroke="#000" stroke-width="2.8"/><path d="M-4 8l4-4 4 4" fill="none" stroke="#000"/><rect x="-1.5" y="1.5" width="3" height="3" fill="#fff" stroke="#ff0000" stroke-width="1.2"/></g><g transform="translate(1630.5 326)"><path d="M-5-5v11M-5-5h6v5M2 1l4 4" fill="none" stroke="#000" stroke-dasharray="1.2 0.8"/><path d="M-5-5v11M2 1l4 4" stroke="#000"/><rect x="-6.5" y="-6.5" width="3" height="3" fill="#fff" stroke="#ff0000" stroke-width="1.2"/><rect x="0.5" y="-1.5" width="3" height="3" fill="#fff" stroke="#ff0000" stroke-width="1.2"/></g><g transform="translate(1659 326)"><path d="M-6 6l6-13 6 13" fill="none" stroke="#000" stroke-dasharray="1.5 1"/><path d="M-6 6l3-6M6 6l-3-6" stroke="#000"/><rect x="-4.5" y="-1.5" width="3" height="3" fill="#fff" stroke="#ff0000" stroke-width="1.2"/><rect x="1.5" y="-1.5" width="3" height="3" fill="#fff" stroke="#ff0000" stroke-width="1.2"/></g><g transform="translate(1687 326)"><path d="M-5-7l5 4v11l-5-4z" fill="none" stroke="#e00"/><path d="M0-3l4-3 4 4v4h-5" fill="#fff" stroke="#33f"/><rect x="-2" y="-1" width="4" height="5" fill="#aaa"/></g><g transform="translate(1602.5 397.5)"><path d="M-5 4l10-10" stroke="#000"/><rect x="-6.5" y="2.5" width="3" height="3" fill="#fff" stroke="#0000ff" stroke-width="1.2"/><rect x="3.5" y="-7.5" width="3" height="3" fill="#fff" stroke="#0000ff" stroke-width="1.2"/></g><g transform="translate(1630.5 397.5)"><path d="M-2-1l4-5 3 3-4 5 2 3" fill="none" stroke="#000"/><rect x="-3.5" y="-2.5" width="3" height="3" fill="#fff" stroke="#0000ff" stroke-width="1.2"/><rect x="0.5" y="-7.5" width="3" height="3" fill="#fff" stroke="#0000ff" stroke-width="1.2"/><rect x="3.5" y="-4.5" width="3" height="3" fill="#fff" stroke="#0000ff" stroke-width="1.2"/><rect x="1.5" y="4.5" width="3" height="3" fill="#fff" stroke="#0000ff" stroke-width="1.2"/></g><g transform="translate(1659 397.5)"><path d="M-3-7h6l4 4v5l-3 5h-8l-3-5v-5z" fill="none" stroke="#000" stroke-width="1.1"/><path d="M-3 7h6" stroke="#000" stroke-width="2"/><rect x="-8.5" y="-5.5" width="3" height="3" fill="#fff" stroke="#0000ff" stroke-width="1.2"/><rect x="-1.5" y="-1.5" width="3" height="3" fill="#fff" stroke="#0000ff" stroke-width="1.2"/></g><g transform="translate(1687 397.5)"><path d="M-6-6l8 3-4 9z" fill="none" stroke="#000"/><rect x="-7.5" y="-7.5" width="3" height="3" fill="#fff" stroke="#0000ff" stroke-width="1.2"/><rect x="0.5" y="-3.5" width="3" height="3" fill="#fff" stroke="#0000ff" stroke-width="1.2"/><rect x="-3.5" y="4.5" width="3" height="3" fill="#fff" stroke="#0000ff" stroke-width="1.2"/></g><g transform="translate(1715 397.5)"><path d="M-6-6h12v12h-12z" fill="none" stroke="#000" stroke-width="1.2"/><rect x="-7.5" y="-7.5" width="3" height="3" fill="#fff" stroke="#0000ff" stroke-width="1.2"/><rect x="4.5" y="4.5" width="3" height="3" fill="#fff" stroke="#0000ff" stroke-width="1.2"/></g><g transform="translate(1743.5 397.5)"><path d="M-7 1l6-6 5 5-5 6z" fill="none" stroke="#000"/><rect x="-2.5" y="-7.5" width="3" height="3" fill="#fff" stroke="#0000ff" stroke-width="1.2"/><rect x="-3.5" y="4.5" width="3" height="3" fill="#fff" stroke="#0000ff" stroke-width="1.2"/><path d="M5 3v3M5 3h2M5 4.5l2 2" stroke="#00f"/></g><g transform="translate(1771 397.5)"><path d="M-7 5l10-9M0-1l6 6" stroke="#000"/><rect x="-1.5" y="-2.5" width="3" height="3" fill="#fff" stroke="#0000ff" stroke-width="1.2"/><rect x="4.5" y="4.5" width="3" height="3" fill="#fff" stroke="#0000ff" stroke-width="1.2"/></g><g transform="translate(1799 397.5)"><path d="M-7 3l12-10M-4 7l10-9" stroke="#000"/><rect x="-1.5" y="-5.5" width="3" height="3" fill="#fff" stroke="#0000ff" stroke-width="1.2"/><rect x="1.5" y="-2.5" width="3" height="3" fill="#fff" stroke="#0000ff" stroke-width="1.2"/></g><g transform="translate(1602.5 426)"><path d="M-5 2l3-4h4l3 4-2 5h-6z" fill="none" stroke="#000" stroke-width="1.1"/><path d="M-2-6l5 3 5 5" fill="none" stroke="#000"/><path d="M-3 7h4" stroke="#000" stroke-width="2"/><rect x="0.5" y="-3.5" width="3" height="3" fill="#fff" stroke="#0000ff" stroke-width="1.2"/></g><g transform="translate(1630.5 426)"><path d="M-7-7c3 0 4 1 5 3l7 7M-1-3c0 5-2 8-4 10" fill="none" stroke="#000"/><rect x="-5" y="6" width="2" height="2" fill="#000"/><rect x="-3.5" y="-6.5" width="3" height="3" fill="#fff" stroke="#ff0000" stroke-width="1.2"/><rect x="4.5" y="2.5" width="3" height="3" fill="#fff" stroke="#0000ff" stroke-width="1.2"/></g><g transform="translate(1659 426)"><path d="M-7-8c4 0 5 2 6 4l7 7M-1-4c0 6-3 10-7 11" fill="none" stroke="#000"/><rect x="-7" y="6" width="3" height="2" fill="#000"/><rect x="-2.5" y="-7.5" width="3" height="3" fill="#fff" stroke="#0000ff" stroke-width="1.2"/><rect x="4.5" y="1.5" width="3" height="3" fill="#fff" stroke="#ff0000" stroke-width="1.2"/></g><g transform="translate(1687 426)"><path d="M-6-7h3l3 3 6 6M-5-4c4 1 3 5 0 6h-2M-3 8v-4l3-3 3 3v4" fill="none" stroke="#000"/><rect x="-3.5" y="-7.5" width="3" height="3" fill="#fff" stroke="#0000ff" stroke-width="1.2"/><rect x="3.5" y="1.5" width="3" height="3" fill="#fff" stroke="#0000ff" stroke-width="1.2"/></g><g transform="translate(1715 426)"><path d="M-8 4l3-1 10-8M0-8v3M3 0h4M-4 3l-1 5" fill="none" stroke="#000"/><rect x="1.5" y="-3.5" width="3" height="3" fill="#fff" stroke="#0000ff" stroke-width="1.2"/><rect x="-4.5" y="0.5" width="3" height="3" fill="#fff" stroke="#0000ff" stroke-width="1.2"/></g><g transform="translate(1743.5 426)"><path d="M0-7v12M0 5l-6-6M0 5l6-6" stroke="#000"/><rect x="-1.5" y="-8.5" width="3" height="3" fill="#fff" stroke="#0000ff" stroke-width="1.2"/><rect x="-7.5" y="-2.5" width="3" height="3" fill="#fff" stroke="#0000ff" stroke-width="1.2"/><rect x="4.5" y="-2.5" width="3" height="3" fill="#fff" stroke="#0000ff" stroke-width="1.2"/><rect x="-1.5" y="4.5" width="3" height="3" fill="#fff" stroke="#0000ff" stroke-width="1.2"/></g><g transform="translate(1602.5 497.5)"><circle r="7" fill="none" stroke="#000" stroke-width="1.1"/><path d="M-2 7.5h4" stroke="#000" stroke-width="2"/><rect x="-1.5" y="-1.5" width="3" height="3" fill="#fff" stroke="#0000ff" stroke-width="1.2"/><rect x="5.5" y="-1.5" width="3" height="3" fill="#fff" stroke="#0000ff" stroke-width="1.2"/></g><g transform="translate(1630.5 497.5)"><circle r="7" fill="none" stroke="#000"/><circle r="4.5" fill="none" stroke="#000"/><path d="M-2 7.5h4" stroke="#000" stroke-width="2"/><rect x="-1.5" y="-1.5" width="3" height="3" fill="#fff" stroke="#0000ff" stroke-width="1.2"/><rect x="3.0" y="-1.5" width="3" height="3" fill="#fff" stroke="#0000ff" stroke-width="1.2"/><rect x="5.5" y="-1.5" width="3" height="3" fill="#fff" stroke="#0000ff" stroke-width="1.2"/></g><g transform="translate(1659 497.5)"><circle r="7" fill="none" stroke="#000" stroke-width="1.1"/><path d="M-2 7.5h4" stroke="#000" stroke-width="2"/><rect x="-8.5" y="-1.5" width="3" height="3" fill="#fff" stroke="#0000ff" stroke-width="1.2"/><rect x="5.5" y="-1.5" width="3" height="3" fill="#fff" stroke="#0000ff" stroke-width="1.2"/></g><g transform="translate(1687 497.5)"><circle cx="0" cy="0.5" r="7" fill="none" stroke="#000" stroke-width="1.1"/><path d="M-8-6l4 2M-2 7.5h4" stroke="#000" stroke-width="1.2"/><rect x="-4.5" y="-7.5" width="3" height="3" fill="#fff" stroke="#0000ff" stroke-width="1.2"/><rect x="2.5" y="3.5" width="3" height="3" fill="#fff" stroke="#0000ff" stroke-width="1.2"/></g><g transform="translate(1715 497.5)"><circle r="7" fill="none" stroke="#000" stroke-width="1.1"/><path d="M-7-7.5h14" stroke="#000" stroke-width="1.1"/><path d="M0-7v14" stroke="#777" stroke-dasharray="1 1"/><rect x="-1.5" y="5.0" width="3" height="3" fill="#fff" stroke="#0000ff" stroke-width="1.2"/><rect x="5.5" y="-1.5" width="3" height="3" fill="#fff" stroke="#0000ff" stroke-width="1.2"/></g><g transform="translate(1743.5 497.5)"><circle r="7" fill="none" stroke="#000" stroke-width="1.1"/><rect x="-6.5" y="-6.5" width="3" height="3" fill="#fff" stroke="#0000ff" stroke-width="1.2"/><rect x="3.5" y="-6.5" width="3" height="3" fill="#fff" stroke="#0000ff" stroke-width="1.2"/><rect x="-1.5" y="5.5" width="3" height="3" fill="#fff" stroke="#0000ff" stroke-width="1.2"/></g><g transform="translate(1771 497.5)"><circle r="6.5" fill="none" stroke="#000" stroke-width="1.1"/><path d="M-6-7l3 2M6-7l-3 2M-6 8l1-3M6 8l-1-3M-8-1l2 1" stroke="#000"/><rect x="-1.5" y="-7.5" width="3" height="3" fill="#fff" stroke="#0000ff" stroke-width="1.2"/><rect x="-6.5" y="0.5" width="3" height="3" fill="#fff" stroke="#0000ff" stroke-width="1.2"/><rect x="3.5" y="2.5" width="3" height="3" fill="#fff" stroke="#0000ff" stroke-width="1.2"/></g><g transform="translate(1799 497.5)"><path d="M-8 5l11-12" stroke="#000"/><circle cx="1" cy="0" r="4" fill="none" stroke="#000"/><path d="M-3 8v-3h7v3" fill="none" stroke="#000"/><rect x="-3.5" y="-3.5" width="3" height="3" fill="#fff" stroke="#0000ff" stroke-width="1.2"/><rect x="2.5" y="-1.5" width="3" height="3" fill="#fff" stroke="#0000ff" stroke-width="1.2"/><rect x="-1.5" y="2.5" width="3" height="3" fill="#fff" stroke="#0000ff" stroke-width="1.2"/></g><g transform="translate(1602.5 525.5)"><ellipse cx="0" cy="0" rx="7" ry="4" fill="none" stroke="#000" stroke-width="1.1"/><rect x="-7.5" y="-4.5" width="3" height="3" fill="#fff" stroke="#0000ff" stroke-width="1.2"/><rect x="4.5" y="1.5" width="3" height="3" fill="#fff" stroke="#0000ff" stroke-width="1.2"/></g><g transform="translate(1630.5 525.5)"><path d="M-6 7c0-8 6-13 12-13-1 7-6 12-12 13z" fill="none" stroke="#000" stroke-width="1.1"/><path d="M-6 7l12-13" stroke="#888" stroke-width="0.6"/><rect x="-7.5" y="5.5" width="3" height="3" fill="#fff" stroke="#0000ff" stroke-width="1.2"/><rect x="4.5" y="-7.5" width="3" height="3" fill="#fff" stroke="#0000ff" stroke-width="1.2"/><rect x="-1.5" y="-1.5" width="3" height="3" fill="#fff" stroke="#0000ff" stroke-width="1.2"/><rect x="1.5" y="1.5" width="3" height="3" fill="#fff" stroke="#0000ff" stroke-width="1.2"/></g><g transform="translate(1659 525.5)"><ellipse cx="0" cy="3" rx="7" ry="4" fill="none" stroke="#000" stroke-width="1.1"/><path d="M-2 7h4" stroke="#000" stroke-width="2"/><text x="-5" y="-2.5" font-family="Liberation Sans" font-size="6" font-weight="bold" fill="#00f">a:b</text></g><g transform="translate(1602.5 597)"><path d="M-7 5c-2-6 1-11 6-11s8 4 8 7" fill="none" stroke="#000" stroke-width="1.1"/><path d="M-7 5l6-5h7" stroke="#777" stroke-width="0.7"/><rect x="-8.5" y="3.5" width="3" height="3" fill="#fff" stroke="#0000ff" stroke-width="1.2"/><rect x="-1.5" y="-1.5" width="3" height="3" fill="#fff" stroke="#0000ff" stroke-width="1.2"/><rect x="5.5" y="-1.5" width="3" height="3" fill="#fff" stroke="#0000ff" stroke-width="1.2"/></g><g transform="translate(1630.5 597)"><path d="M-7 5c-2-6 1-11 6-11s8 4 8 7M-4 3c-1-4 1-7 4-7s5 3 5 4" fill="none" stroke="#000" stroke-width="1.1"/><rect x="-8.5" y="3.5" width="3" height="3" fill="#fff" stroke="#0000ff" stroke-width="1.2"/><rect x="-1.5" y="-1.5" width="3" height="3" fill="#fff" stroke="#0000ff" stroke-width="1.2"/><rect x="5.5" y="-1.5" width="3" height="3" fill="#fff" stroke="#0000ff" stroke-width="1.2"/></g><g transform="translate(1659 597)"><path d="M-7 0c1 6 5 8 8 8s6-3 6-9-1-4-1-5" fill="none" stroke="#000" stroke-width="1.1"/><path d="M-7 0h4l5-5" stroke="#777" stroke-dasharray="1 1"/><rect x="-8.5" y="-2.5" width="3" height="3" fill="#fff" stroke="#0000ff" stroke-width="1.2"/><rect x="3.5" y="-7.5" width="3" height="3" fill="#fff" stroke="#0000ff" stroke-width="1.2"/></g><g transform="translate(1687 597)"><path d="M-8 5l11-12M-6-7l12 12" stroke="#000" stroke-width="0.9"/><path d="M-6-7l12 12" stroke="#777" stroke-dasharray="1 1"/><path d="M0 3a3 3 0 0 1 3-3" fill="none" stroke="#000"/><rect x="1.5" y="-2.5" width="3" height="3" fill="#fff" stroke="#0000ff" stroke-width="1.2"/><rect x="-0.5" y="2.5" width="3" height="3" fill="#fff" stroke="#0000ff" stroke-width="1.2"/></g><g transform="translate(1715 597)"><text x="-8" y="-2" font-family="Liberation Sans" font-size="7" fill="#000">1</text><text x="-8" y="8" font-family="Liberation Sans" font-size="7" fill="#000">3</text><text x="-2" y="3" font-family="Liberation Sans" font-size="7" fill="#000">2</text><path d="M1-6c4 1 6 3 6 6s-2 5-6 7" fill="none" stroke="#000" stroke-width="1.1"/><rect x="-0.5" y="-7.5" width="3" height="3" fill="#fff" stroke="#0000ff" stroke-width="1.2"/><rect x="5.5" y="-1.5" width="3" height="3" fill="#fff" stroke="#0000ff" stroke-width="1.2"/><rect x="-0.5" y="5.5" width="3" height="3" fill="#fff" stroke="#0000ff" stroke-width="1.2"/></g><g transform="translate(1743.5 597)"><text x="-8" y="-2" font-family="Liberation Sans" font-size="7" fill="#000">1</text><text x="-8" y="8" font-family="Liberation Sans" font-size="7" fill="#000">2</text><text x="-2" y="3" font-family="Liberation Sans" font-size="7" fill="#000">3</text><path d="M1-6c4 1 6 3 6 6s-2 5-6 7" fill="none" stroke="#000" stroke-width="1.1"/><rect x="-0.5" y="-7.5" width="3" height="3" fill="#fff" stroke="#0000ff" stroke-width="1.2"/><rect x="5.5" y="-1.5" width="3" height="3" fill="#fff" stroke="#0000ff" stroke-width="1.2"/><rect x="-0.5" y="5.5" width="3" height="3" fill="#fff" stroke="#0000ff" stroke-width="1.2"/></g><g transform="translate(1771 597)"><path d="M-6 -3c-2 4 0 9 5 9s7-4 6-8c-1-3-3-5-6-4" fill="none" stroke="#000" stroke-width="1.1"/><path d="M-8-7l4 3M-8 1l3 1M3-5h3l-3 5h4" fill="none" stroke="#000" stroke-width="0.9"/><rect x="-1.5" y="-8.5" width="3" height="3" fill="#fff" stroke="#0000ff" stroke-width="1.2"/><rect x="-6.5" y="0.5" width="3" height="3" fill="#fff" stroke="#0000ff" stroke-width="1.2"/><rect x="3.5" y="2.5" width="3" height="3" fill="#fff" stroke="#0000ff" stroke-width="1.2"/></g><g transform="translate(1799 597)"><path d="M-8 5l11-12" stroke="#000"/><path d="M-3 8v-3h7v3" fill="none" stroke="#000"/><path d="M0-2a3 3 0 0 1 5 0" fill="none" stroke="#000"/><rect x="-3.5" y="-3.5" width="3" height="3" fill="#fff" stroke="#0000ff" stroke-width="1.2"/><rect x="2.5" y="-1.5" width="3" height="3" fill="#fff" stroke="#0000ff" stroke-width="1.2"/><rect x="-1.5" y="2.5" width="3" height="3" fill="#fff" stroke="#0000ff" stroke-width="1.2"/></g><g transform="translate(1602.5 625.5)"><path d="M-7 6l11-12" stroke="#000"/><path d="M1-3a4 4 0 0 1 0 6" fill="none" stroke="#888"/><path d="M-3 8v-3h7v3" fill="none" stroke="#000"/><rect x="-2.5" y="-3.5" width="3" height="3" fill="#fff" stroke="#0000ff" stroke-width="1.2"/><rect x="-1.5" y="3.5" width="3" height="3" fill="#fff" stroke="#0000ff" stroke-width="1.2"/></g><g transform="translate(1630.5 625.5)"><path d="M-6 6c-2-6 1-11 6-11 3 0 6 3 7 5M-2-8l4 3" fill="none" stroke="#000" stroke-width="1.1"/><path d="M-6 6l6-4h6" stroke="#888" stroke-dasharray="1 1"/><rect x="-7.5" y="4.5" width="3" height="3" fill="#fff" stroke="#0000ff" stroke-width="1.2"/><rect x="-3.5" y="-6.5" width="3" height="3" fill="#fff" stroke="#0000ff" stroke-width="1.2"/><rect x="4.5" y="-1.5" width="3" height="3" fill="#fff" stroke="#0000ff" stroke-width="1.2"/></g><g transform="translate(1659 625.5)"><ellipse cx="0" cy="1" rx="7" ry="4" fill="none" stroke="#000" stroke-width="1.1"/><path d="M-3-2l3 3 3-3" stroke="#888" fill="none"/><rect x="-7.5" y="-4.5" width="3" height="3" fill="#fff" stroke="#0000ff" stroke-width="1.2"/><rect x="-4.5" y="-3.5" width="3" height="3" fill="#fff" stroke="#0000ff" stroke-width="1.2"/><rect x="1.5" y="-3.5" width="3" height="3" fill="#fff" stroke="#0000ff" stroke-width="1.2"/><rect x="4.5" y="2.5" width="3" height="3" fill="#fff" stroke="#0000ff" stroke-width="1.2"/></g><g transform="translate(1687 625.5)"><path d="M-7 7c0-8 6-13 13-13-1 7-6 12-13 13z" fill="none" stroke="#000" stroke-width="1.1"/><path d="M-7 7l13-13" stroke="#888" stroke-width="0.6"/><rect x="-8.5" y="5.5" width="3" height="3" fill="#fff" stroke="#0000ff" stroke-width="1.2"/><rect x="4.5" y="-7.5" width="3" height="3" fill="#fff" stroke="#0000ff" stroke-width="1.2"/><rect x="2.5" y="-0.5" width="3" height="3" fill="#fff" stroke="#0000ff" stroke-width="1.2"/><rect x="-1.5" y="4.5" width="3" height="3" fill="#fff" stroke="#0000ff" stroke-width="1.2"/></g><g transform="translate(1715 625.5)"><path d="M-7 4c0-3 3-5 7-5s7 2 7 5" fill="none" stroke="#000" stroke-width="1.2"/><text x="-5" y="-4" font-family="Liberation Sans" font-size="6" font-weight="bold" fill="#00f">a:b</text></g><path d="M1584.5 198.5v13l3-3 2.5 5 1.8-.9-2.5-4.8h4.2z" fill="#fff" stroke="#000" stroke-width="1.1"/><rect x="1608" y="199" width="3" height="3" fill="#4040ff"/><path d="M1611 200l2-3M1609 202c-2 2-3 5-3 8" fill="none" stroke="#333"/><path d="M1611.5 204v9l2-2 1.5 3 1-.5-1.5-3h3z" fill="#fff" stroke="#333" stroke-width="0.9"/><circle cx="1633" cy="205.5" r="7" fill="#2f6fd0"/><path d="M1628 202c2-3 6-3 8-1l-2 3-3 1-1 4-3-2z" fill="#3c3"/><path d="M1631 212c3 0 5-2 6-4" stroke="#fff" stroke-width="1.5" fill="none"/><path d="M1637 199l2-1" stroke="#fff"/><path d="M1754 204l6-4 6 4v8l-6 3-6-3z" fill="#e33" stroke="#822" stroke-width="0.8"/><path d="M1760 200v15" stroke="#922"/><path d="M1756 198l4 4M1760 198l2-1 3 3-2 2" fill="none" stroke="#444"/><path d="M1766 213h4v-4z" fill="#333"/><path d="M1583 698l5-3 5 3v8l-5 3-5-3z" fill="#e00" stroke="#600" stroke-width="0.8"/><path d="M1585 694l4 4M1589 694l2-1 3 3-2 2" fill="none" stroke="#333"/><rect x="1591" y="698" width="3" height="4" fill="#ff0" stroke="#333" stroke-width="0.5"/><g fill="none" stroke="#1a1a8a" stroke-width="1.2"><rect x="1650.5" y="695.5" width="8" height="8"/><rect x="1653.5" y="698.5" width="8" height="8"/></g><rect x="1646.5" y="701.5" width="6" height="6" fill="#fff" stroke="#000"/><path d="M1648 706l3-3" stroke="#000"/></svg><!--/PANEL-->
<!-- measurement info -->
<div style="left:1576px;top:720px;width:284px;height:1px;background:#3c3c3c"></div>
<div style="left:1576px;top:720px;width:1px;height:28px;background:#3c3c3c"></div>
<div style="left:1859px;top:720px;width:1px;height:28px;background:#3c3c3c"></div>
<div style="left:1577px;top:721px;width:282px;height:27px;background:linear-gradient(#bccbdc,#dce6f1)"></div>
<div class="t" style="left:1580px;top:725px">Measurement Info</div>
<div style="left:1843px;top:727px;width:14px;height:14px;background:#a9a9a9;border:1px solid #e6e6e6"></div>
<svg style="left:1843px;top:727px" width="14" height="14"><path d="M4 4l6 6M10 4l-6 6" stroke="#fff" stroke-width="2"/></svg>
<svg style="left:1822px;top:726px" width="18" height="17"><circle cx="11" cy="6" r="4.5" fill="#d8d8d8" stroke="#9a9a9a" stroke-width="0.8"/><ellipse cx="8" cy="9" rx="5" ry="3.5" fill="#c8c8c8" stroke="#9a9a9a" stroke-width="0.8" transform="rotate(-35 8 9)"/><path d="M5 12l-3.5 3.5" stroke="#888" stroke-width="1.4"/></svg>
<div style="left:1581px;top:755px;width:23px;height:22px;background:#f7f7f7;border-top:1px solid #d0d0d0;border-left:1px solid #d0d0d0"></div>
<svg style="left:1585px;top:759px" width="14" height="14"><rect x="1.5" y="1.5" width="11" height="11" fill="#fff" stroke="#111"/><path d="M3.5 4.5h7M3.5 6.5h7M3.5 8.5h7M3.5 10.5h7M5.5 3v9" stroke="#111" stroke-width="1"/></svg>
<svg style="left:1609px;top:760px" width="13" height="13"><path d="M2 2l9 9M11 2l-9 9" stroke="#333" stroke-width="2"/></svg>
<div style="left:1580px;top:780px;width:276px;height:142px;background:#fff;border:1px solid #a8a8a8"></div>
<div style="left:1834px;top:782px;width:20px;height:137px;background:#f0f0f0"></div>
<svg style="left:1838px;top:786px" width="12" height="10"><path d="M1.5 7.5l4.5-4.5 4.5 4.5" fill="none" stroke="#b8b8b8" stroke-width="1.4"/></svg>
<svg style="left:1838px;top:904px" width="12" height="10"><path d="M1.5 2.5l4.5 4.5 4.5-4.5" fill="none" stroke="#b8b8b8" stroke-width="1.4"/></svg>
<!-- selection info tab -->
<div style="left:1861px;top:161px;width:24px;height:122px;background:#fff;border-right:1px solid #e0e0e0"></div>
<svg style="left:1866px;top:165px" width="16" height="18"><path d="M3 1v13l3-3 2.5 5 2-1-2.5-5h4z" fill="#00007a"/><rect x="12" y="11" width="2" height="2" fill="#1e1eff"/><rect x="12" y="14" width="2" height="2" fill="#1e1eff"/></svg>
<div class="t" style="left:1882.5px;top:185px;transform:rotate(90deg);transform-origin:0 0;font-size:14.5px">Selection Info</div>
<!-- right toolbar -->
<div style="left:1886px;top:161px;width:34px;height:470px;background:#f0f0f0;border-left:1px solid #fafafa;border-bottom:1px solid #d0d0d0"></div>

<!--RIGHT--><svg style="left:1886px;top:160px" width="34" height="475" viewBox="1886 160 34 475"><path d="M1889 166.5H1918" stroke="#a8a8a8" stroke-dasharray="2 2" stroke-width="1.5"/><path d="M1890 203.5H1916" stroke="#a0a0a0"/><path d="M1890 269.5H1916" stroke="#a0a0a0"/><path d="M1890 335.5H1916" stroke="#a0a0a0"/><path d="M1890 371.5H1916" stroke="#a0a0a0"/><path d="M1890 527.5H1916" stroke="#a0a0a0"/><path d="M1890 593.5H1916" stroke="#a0a0a0"/><path d="M1916 199h4v-4z" fill="#000"/><path d="M1916 235h4v-4z" fill="#000"/><path d="M1916 264h4v-4z" fill="#000"/><path d="M1916 300h4v-4z" fill="#000"/><path d="M1916 332h4v-4z" fill="#000"/><path d="M1916 368h4v-4z" fill="#000"/><path d="M1916 405h4v-4z" fill="#000"/><path d="M1916 434h4v-4z" fill="#000"/><path d="M1916 463h4v-4z" fill="#000"/><path d="M1916 494h4v-4z" fill="#000"/><path d="M1916 524h4v-4z" fill="#000"/><path d="M1916 561h4v-4z" fill="#000"/><path d="M1916 589h4v-4z" fill="#000"/><path d="M1894.5 178v17h7l-7-8" fill="none" stroke="#ccc"/><path d="M1913.5 178v17h-8l8-8z" fill="#aaa" stroke="#aaa"/><path d="M1898 226l12-12M1902 230l12-12M1906 234l10-10" stroke="#333"/><path d="M1899 224l5-5M1903 228l5-5M1907 232l5-5" stroke="#e33"/><path d="M1893 220l5-5M1893 220h3M1893 220v-3" stroke="#33f" fill="none"/><path d="M1895 228l8 6" stroke="#fff" stroke-width="2"/><path d="M1892 258l6-6v6zM1916 243l-6 6v-6z" fill="#33f"/><path d="M1910 243l6 6h-6z" fill="#e33"/><path d="M1897 253l7-7" stroke="#999" stroke-width="2.5"/><path d="M1897 253l7-7" stroke="#fff" stroke-width="1"/><path d="M1895.5 283.5h5v5h-5z" fill="none" stroke="#333" stroke-dasharray="2 1"/><path d="M1901 282c3 0 4 2 5 5" fill="none" stroke="#0d0"/><path d="M1904 286l2 2 2-2" fill="none" stroke="#0d0"/><rect x="1902.5" y="290.5" width="8" height="7" fill="none" stroke="#e33"/><path d="M1894.5 315.5h15v9h-15zM1898.5 318.5h8v4h-8zM1903 309v8M1901 315l2 3 2-3" fill="none" stroke="#bbb"/><rect x="1893.5" y="344.5" width="8" height="8" fill="#c8c8c8" stroke="#888"/><rect x="1908.5" y="356.5" width="7" height="8" fill="#c8c8c8" stroke="#888"/><rect x="1897.5" y="347.5" width="14" height="14" fill="#e8e8e8" stroke="#888"/><g fill="none" stroke="#aaa"><rect x="1895.5" y="384.5" width="16" height="12"/><path d="M1895.5 388.5h16M1895.5 392.5h16M1900 388v8M1907 388v8"/></g><rect x="1900" y="389" width="7" height="3" fill="#fff" stroke="#aaa"/><g fill="none" stroke="#aaa"><path d="M1895.5 415.5l3-3h13v12l-3 3h-13zM1895.5 415.5h13v12M1908.5 415.5l3-3"/></g><path d="M1895 420.5h17" stroke="#33f" stroke-width="1.3"/><path d="M1897 424l3-3M1900 424l3-3M1903 424l3-3M1906 424l3-3" stroke="#33f" stroke-width="0.8"/><path d="M1892.5 447.5l3-3h6v12l-4 4h-5z" fill="#e8e8e8" stroke="#999"/><circle cx="1904" cy="449" r="8" fill="#d4d4d4" stroke="#aaa"/><circle cx="1902" cy="449" r="4" fill="#ececec"/><path d="M1892 474l6-5 8 8-6 5z" fill="#ff0" stroke="#222" stroke-width="1.2"/><path d="M1895 477l4-3" stroke="#222"/><path d="M1900 482l6-5 3 3-6 4z" fill="#ddd" stroke="#444"/><g stroke="#33f" stroke-width="1.2"><path d="M1911 480h4M1913 478v4M1898 486h4M1900 484v4M1907 489h4M1909 487v4"/></g><g fill="#0a0"><rect x="1912.5" y="479.5" width="1" height="1"/><rect x="1899.5" y="485.5" width="1" height="1"/><rect x="1908.5" y="488.5" width="1" height="1"/></g><g fill="none" stroke="#333"><rect x="1891.5" y="499.5" width="10" height="12"/><path d="M1891.5 505.5h10M1896.5 499.5v12"/><rect x="1904.5" y="509.5" width="10" height="11"/><path d="M1904.5 520.5l10-11"/></g><path d="M1905 502h8l-4 3" fill="none" stroke="#33f" stroke-width="1.5"/><path d="M1906 505h6l-3 3z" fill="#33f"/><circle cx="1903" cy="546.5" r="11" fill="#fff" stroke="#9c0" stroke-width="1.3"/><path d="M1896 540l4 4M1910 540l-4 4M1896 553l4-4M1910 553l-4-4" stroke="#33f" stroke-width="1.5"/><path d="M1900 544v-3M1900 544h-3M1906 544v-3M1906 544h3M1900 549v3M1900 549h-3M1906 549v3M1906 549h3" stroke="#33f" stroke-width="1.3"/><rect x="1892.5" y="567.5" width="9" height="5" rx="1" fill="#555"/><rect x="1895" y="569" width="4" height="2" fill="#ddd"/><path d="M1900 584l10-9" stroke="#888" stroke-width="1.3"/><rect x="1899.0" y="583.0" width="3" height="3" fill="#fff" stroke="#3030ff" stroke-width="1"/><rect x="1909.5" y="573.5" width="3" height="3" fill="#fff" stroke="#3030ff" stroke-width="1"/><g fill="none" stroke="#aaa"><path d="M1893.5 604.5h11v10M1897.5 611.5h13v9h-13z"/></g><g fill="#aaa"><rect x="1891" y="602" width="4" height="4"/><rect x="1903" y="602" width="4" height="4"/><rect x="1891" y="613" width="4" height="4"/><rect x="1896" y="609" width="4" height="4"/><rect x="1909" y="609" width="4" height="4"/><rect x="1896" y="619" width="4" height="4"/><rect x="1909" y="619" width="4" height="4"/></g></svg><!--/RIGHT-->
<!-- ===== inspector bar ===== -->
<div style="left:0;top:947px;width:1920px;height:1px;background:#fafafa"></div>
<div style="left:0;top:998px;width:1920px;height:1px;background:#a0a0a0"></div>

<!-- ===== inspector content ===== -->
<div class="t lab" style="left:62px">Scale X</div>
<div class="inp" style="left:63px;width:60px">1</div>
<div class="spin" style="left:123px"></div><div class="up" style="left:127px;top:975px"></div><div class="dn" style="left:127px;top:987px"></div>
<div class="t lab" style="left:147px">Scale Y</div>
<div class="inp" style="left:148px;width:48px">1</div>
<div class="spin" style="left:196px"></div><div class="up" style="left:200px;top:975px"></div><div class="dn" style="left:200px;top:987px"></div>
<div class="t lab" style="left:220px">Scale Z</div>
<div class="inp" style="left:221px;width:30px">1</div>
<div class="spin" style="left:251px"></div><div class="up" style="left:255px;top:975px"></div><div class="dn" style="left:255px;top:987px"></div>
<div class="t lab" style="left:275px">Size X</div>
<div class="inp" style="left:276px;width:63px">0 mm</div>
<div class="t lab" style="left:343px">Size Y</div>
<div class="inp" style="left:344px;width:69px">0 mm</div>
<div class="t lab" style="left:417px">Size Z</div>
<div class="inp" style="left:418px;width:50px">0 mm</div>
<div class="t lab" style="left:472px">Pos X</div>
<div class="inp" style="left:473px;width:50px">0 mm</div>
<div class="t lab" style="left:527px">Pos Y</div>
<div class="inp" style="left:528px;width:50px">0 mm</div>
<div class="t lab" style="left:582px">Pos Z</div>
<div class="inp" style="left:583px;width:50px">0 mm</div>
<div class="t lab" style="left:637px">Delta X</div>
<div class="inp" style="left:638px;width:51px">0 mm</div>
<div class="t lab" style="left:692px">Delta Y</div>
<div class="inp" style="left:693px;width:51px">0 mm</div>
<div class="t lab" style="left:747px">Delta Z</div>
<div class="inp" style="left:748px;width:51px">0 mm</div>
<div class="t lab" style="left:802px">Rot X</div>
<div class="inp" style="left:803px;width:30px">0</div>
<div class="spin" style="left:833px"></div><div class="up" style="left:837px;top:975px"></div><div class="dn" style="left:837px;top:987px"></div>
<div class="t lab" style="left:857px">Rot Y</div>
<div class="inp" style="left:858px;width:30px">0</div>
<div class="spin" style="left:888px"></div><div class="up" style="left:892px;top:975px"></div><div class="dn" style="left:892px;top:987px"></div>
<div class="t lab" style="left:912px">Rot Z</div>
<div class="inp" style="left:913px;width:30px">0</div>
<div class="spin" style="left:943px"></div><div class="up" style="left:947px;top:975px"></div><div class="dn" style="left:947px;top:987px"></div>
<div class="t lab" style="left:967px">Delta D</div>
<div class="inp" style="left:968px;width:51px">0 mm</div>
<div class="t lab" style="left:1022px">Delta A</div>
<div class="inp" style="left:1023px;width:30px">0</div>
<div class="spin" style="left:1053px"></div><div class="up" style="left:1057px;top:975px"></div><div class="dn" style="left:1057px;top:987px"></div>
<svg style="left:0;top:945px" width="1920" height="55" viewBox="0 945 1920 55"><path d="M5.5 950V998" stroke="#b0b0b0" stroke-dasharray="2 2"/><path d="M15 970l11 11M26 970l-11 11" stroke="#a8a8a8" stroke-width="2.6"/><g fill="none" stroke="#a0a0a0"><rect x="36.5" y="968.5" width="14" height="12"/><path d="M36.5 971.5h14M36.5 974.5h14M36.5 977.5h14M40.5 971v10M44.5 971v10M47.5 971v10"/></g><path d="M56.5 953V995" stroke="#a0a0a0"/><path d="M1077.5 953V995" stroke="#a0a0a0"/><path d="M1149.5 953V995" stroke="#a0a0a0"/><path d="M1243.5 953V995" stroke="#a0a0a0"/><path d="M1085 975l3-4h9l2-2v6l-6 4h-6z" fill="#fff" stroke="#555"/><rect x="1086.5" y="975.5" width="6" height="6" fill="#fff" stroke="#555"/><path d="M1087 977h5M1089 976v5" stroke="#555" stroke-width="0.8"/><path d="M1097 969v5" stroke="#33f" stroke-width="1.5"/><path d="M1090 971l7-4" stroke="#555"/><rect x="1106.5" y="967.5" width="8" height="8" fill="#fff" stroke="#555"/><path d="M1112 982l8-14" stroke="#555"/><rect x="1113.5" y="975.5" width="8" height="7" fill="#fff" stroke="#555"/><text x="1114" y="982" font-family="Liberation Sans" font-size="6" fill="#555">G</text><path d="M1129 982c0-4 2-6 5-6s5-1 5-5v-3" fill="none" stroke="#555" stroke-width="1.2"/><path d="M1130 982c0-3 2-4 4-4" fill="none" stroke="#999"/><circle cx="1136" cy="975" r="1.5" fill="#4a90e2"/><path d="M1139 977l4 4M1139 977h3M1139 977v3" stroke="#4a90e2" fill="none" stroke-width="1.3"/><rect x="1153" y="963" width="23" height="22" fill="#cce8ff" stroke="#99d1ff"/><rect x="1157.5" y="967.5" width="14" height="14" fill="#0a6a5a" stroke="#000" stroke-width="1.2"/><path d="M1158 968l13 13v-13z" fill="#20e020"/><path d="M1158 968l13 13" stroke="#000"/><path d="M1158 968h13v13" fill="none" stroke="#fff" stroke-dasharray="1 1"/><path d="M1178.5 981.5v-14l14 14z" fill="#50a8a8" stroke="#333"/><rect x="1184.5" y="967.5" width="10" height="7" fill="#fff" stroke="#333"/><path d="M1186 969l1 4 1-3 1 3 1-4M1191.5 973v-4h1.5a1 1 0 0 1 0 2h-1.5" fill="none" stroke="#333" stroke-width="0.8"/><path d="M1200.5 967.5l14 14h-14z" fill="#50e050" stroke="#333" stroke-dasharray="1 1"/><rect x="1206.5" y="967.5" width="10" height="7" fill="#fff" stroke="#333"/><path d="M1210.5 969.5h-2v3h2M1212 973v-4h1.5a1 1 0 0 1 0 2h-1.5" fill="none" stroke="#333" stroke-width="0.8"/><path d="M1223.5 970.5h6v6h4v6h5" fill="none" stroke="#333" stroke-width="3"/><path d="M1223.5 970.5h6v6h4v6h5" fill="none" stroke="#60e060" stroke-width="1.3"/><rect x="1231.5" y="967.5" width="7" height="8" fill="#fff" stroke="#333"/><path d="M1234 974v-5h3M1234 971.5h2" fill="none" stroke="#333" stroke-width="0.9"/><path d="M1252 976c0-5 4-7 8-7s6 3 5 6" fill="none" stroke="#222" stroke-width="3"/><path d="M1252 976c0-5 4-7 8-7s6 3 5 6" fill="none" stroke="#30c030" stroke-width="1.5"/><path d="M1249 973l3 5 4-4z" fill="#30c030" stroke="#222" stroke-width="0.8"/><path d="M1258.5 974v10l2.5-2.5 2 4 1.5-.7-2-4h3.5z" fill="#fff" stroke="#222"/><path d="M1273 967l6 6h-6z" fill="#e33"/><path d="M1287 981l-6-6v6z" fill="#4a90e2"/><path d="M1273 967l14 14" stroke="#cc0" stroke-dasharray="1 2"/><path d="M1293 982l5-12 5 12zM1297 982l5-10 6 10z" fill="none" stroke="#333"/><path d="M1300 982l4-8 4 8z" fill="none" stroke="#e33"/><path d="M1317 981h15l-2-4h-11z" fill="#e0e0e0" stroke="#aaa"/><ellipse cx="1324.5" cy="972" rx="4" ry="3.5" fill="#eee" stroke="#aaa"/><path d="M1319 977c2-2 9-2 11 0" fill="none" stroke="#aaa"/><rect x="1340.5" y="968.5" width="13" height="13" fill="none" stroke="#999" stroke-dasharray="1 1"/><circle cx="1346" cy="976" r="3.5" fill="none" stroke="#333"/><path d="M1340 982l14-14" stroke="#e33"/><rect x="1340" y="977" width="4" height="4" fill="#33f"/><rect x="1360.5" y="968.5" width="14" height="13" fill="none" stroke="#c0c0c0" stroke-width="1.5"/><path d="M1363 971l9 8M1372 971l-9 8" stroke="#c8c8c8" stroke-width="1.5"/><path d="M1382.5 973.5h9v8h-9zM1385 975.5h5v4h-5zM1391 972l5-3h2" fill="none" stroke="#c0c0c0" stroke-width="1.2"/><path d="M1404.5 973.5h9v8h-9zM1407 975.5h5v4h-5zM1413 972l5-3h2" fill="none" stroke="#c0c0c0" stroke-width="1.2"/><path d="M1426.5 973.5h9v8h-9zM1429 975.5h5v4h-5zM1435 972l5-3h2" fill="none" stroke="#c0c0c0" stroke-width="1.2"/><path d="M1448.5 973.5h9v8h-9zM1451 975.5h5v4h-5zM1457 972l5-3h2" fill="none" stroke="#c0c0c0" stroke-width="1.2"/><path d="M1470.5 973.5h9v8h-9zM1473 975.5h5v4h-5zM1479 972l5-3h2" fill="none" stroke="#c0c0c0" stroke-width="1.2"/><rect x="1492.5" y="968.5" width="15" height="13" fill="none" stroke="#999" stroke-dasharray="1 1"/><circle cx="1500" cy="976" r="4" fill="none" stroke="#333" stroke-width="1.5"/><path d="M1493 982l14-14" stroke="#e33"/><rect x="1493" y="970" width="3" height="3" fill="#6af"/><rect x="1504" y="979" width="3" height="3" fill="#6af"/></svg>
<!-- ===== status bar ===== -->
<div class="t" style="left:9px;top:1006px;font-size:14.5px">Select object(s)</div>
<div class="t" style="left:1335px;top:1008.5px;font-size:14px">SNAP</div>
<div class="vl" style="left:1374px;top:1002px;height:27px;background:#dadada"></div>
<div class="t" style="left:1380px;top:1008.5px;font-size:14px">GEO</div>
<div class="vl" style="left:1411px;top:1002px;height:27px;background:#dadada"></div>
<div style="left:1429px;top:1005px;width:8px;height:8px;border:1.5px solid #222"></div>
<div class="t" style="left:1430px;top:1014px;font-size:11px;color:#444">x</div>
<div class="t" style="left:1439px;top:1004px;width:95px;height:24px;border:1px solid #000;background:#fff;padding:3.5px 0 0 6px;font-size:14.5px;overflow:hidden">15141,4538 m</div>
<div style="left:1547px;top:1005px;width:8px;height:8px;border:1.5px solid #222"></div>
<div class="t" style="left:1547px;top:1014px;font-size:11px;color:#444">Y</div>
<div class="t" style="left:1557px;top:1004px;width:94px;height:24px;border:1px solid #000;background:#fff;padding:3.5px 0 0 5px;font-size:14.5px;overflow:hidden">-5428,8364 m</div>
<div style="left:1665px;top:1005px;width:8px;height:8px;border:1.5px solid #222"></div>
<div class="t" style="left:1666px;top:1014px;font-size:11px;color:#444">z</div>
<div class="t" style="left:1675px;top:1004px;width:96px;height:24px;border:1px solid #000;background:#fff;padding:3.5px 0 0 6px;font-size:14.5px;color:#999">0 mm</div>
<div class="vl" style="left:1778px;top:1002px;height:27px;background:#dadada"></div>
<div class="t" style="left:1781px;top:1006px;font-size:14.5px">7%</div>
<div class="vl" style="left:1848px;top:1002px;height:27px;background:#dadada"></div>
<div class="t" style="left:1852px;top:1006px;font-size:14.5px">22:19</div>
</body></html>
